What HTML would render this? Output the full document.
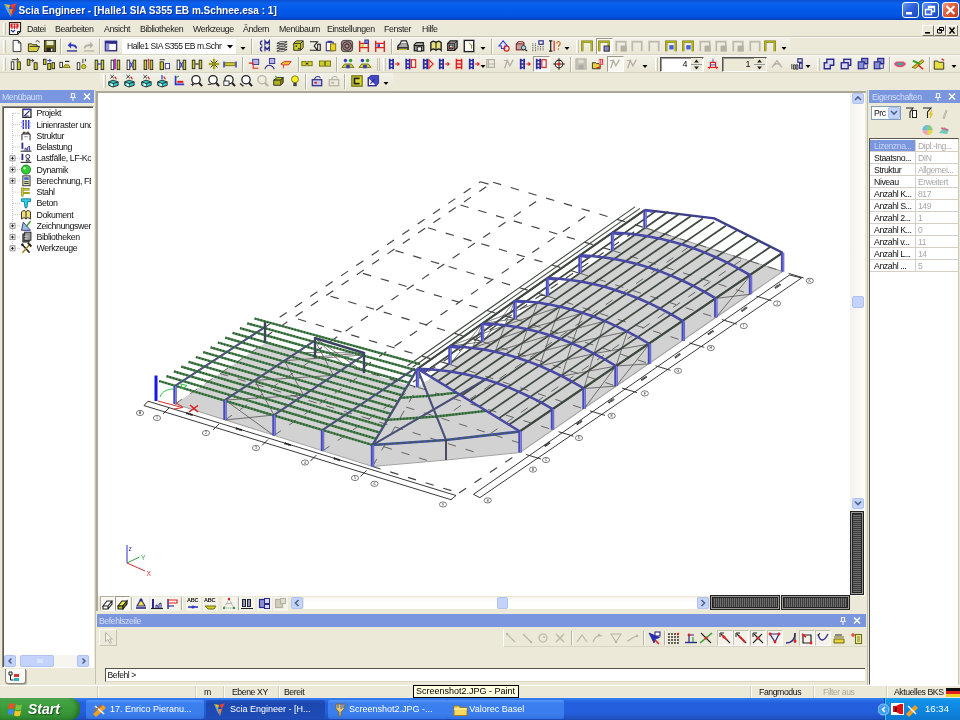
<!DOCTYPE html>
<html lang="de">
<head>
<meta charset="utf-8">
<title>Scia Engineer - [Halle1 SIA S355 EB m.Schnee.esa : 1]</title>
<style>
*{box-sizing:border-box;margin:0;padding:0}
html,body{width:960px;height:720px;overflow:hidden;background:#ECE9D8;font-family:"Liberation Sans",sans-serif;font-size:9px;color:#000}
body{position:relative;will-change:transform}
.a{position:absolute}
.grip{width:3px;height:13px;border-left:1px solid #fff;border-right:1px solid #C8C5B5}
.sep{width:2px;height:15px;border-left:1px solid #B5B2A2;border-right:1px solid #fff}
.ph{height:13px;background:#7A96DF;color:#D6DFF8;font-size:8.7px;letter-spacing:-0.42px;line-height:14px;padding-left:2px;white-space:nowrap;overflow:hidden}
.mi{top:23.5px;font-size:8.8px;letter-spacing:-0.4px;color:#1a1a1a;white-space:nowrap}
.tr{font-size:8.8px;letter-spacing:-0.4px;color:#111;white-space:nowrap;line-height:11px}
.pk{font-size:8.8px;letter-spacing:-0.45px;color:#111;white-space:nowrap;line-height:10px}
.pv{font-size:8.6px;letter-spacing:-0.45px;color:#A8A8A8;white-space:nowrap;line-height:10px}
.st{font-size:8.7px;letter-spacing:-0.42px;color:#111;white-space:nowrap;line-height:12px}
.tk{top:700px;height:19px;border-radius:2px;color:#fff;font-size:9px;line-height:19px;white-space:nowrap;overflow:hidden}
</style>
</head>
<body>
<!-- title bar -->
<div class="a" style="left:0px;top:0px;width:960px;height:20px;background:linear-gradient(#0A4CCB 0,#0C5CE4 2px,#0A62F0 4px,#045AEA 8px,#0356E6 14px,#0450DC 17px,#0344C4 19px,#033CB0 20px)"></div><svg class="a" style="left:3px;top:2px" width="16" height="16" viewBox="0 0 16 16"><path d="M1 2l6 1-1 4z" fill="#E8C020"/><path d="M7 3l7-2-4 6z" fill="#E84040"/><path d="M6 7l4 0-2 8z" fill="#F08030"/><path d="M1 2l5 5 2 8-4-6z" fill="#60B0E0"/><path d="M10 7l4-6-2 8-4 6z" fill="#C03030"/></svg>
<div class="a" style="left:18.6px;top:3.8px;white-space:nowrap;font-weight:bold;font-size:10.05px;line-height:14px;color:#fff;letter-spacing:0px;text-shadow:1px 1px 0 #10308C">Scia Engineer - [Halle1 SIA S355 EB m.Schnee.esa : 1]</div><div class="a" style="left:902px;top:2px;width:17px;height:16px;border:1px solid #fff;border-radius:3px;background:linear-gradient(135deg,#6C9CF4,#2F62DC 45%,#1C48C0)"></div><div class="a" style="left:922px;top:2px;width:17px;height:16px;border:1px solid #fff;border-radius:3px;background:linear-gradient(135deg,#6C9CF4,#2F62DC 45%,#1C48C0)"></div><div class="a" style="left:942px;top:2px;width:17px;height:16px;border:1px solid #fff;border-radius:3px;background:linear-gradient(135deg,#F0A088,#E0603C 40%,#C83C18)"></div><svg class="a" style="left:902px;top:2px" width="57" height="16" viewBox="0 0 57 16"><rect x="4" y="10" width="6" height="2.5" fill="#fff"/><path d="M26.5 4.5h6v5h-6zM26.5 5.5h6" fill="none" stroke="#fff" stroke-width="1.4"/><path d="M23.500 7.500h6v5h-6z" fill="#3A6CE0" stroke="#fff" stroke-width="1.4"/><path d="M44.500 4l8 8M52.500 4l-8 8" stroke="#fff" stroke-width="2.2"/></svg>
<!-- menu bar -->
<div class="a grip" style="left:3px;top:23px;width:3px;height:12px;"></div><svg class="a" style="left:8px;top:21px" width="14" height="15" viewBox="0 0 14 15"><path d="M1.500 1.500h11v9l-3 3h-8z" fill="#fff" stroke="#222" stroke-width="1.2"/><path d="M9.500 13.500v-3h3" fill="none" stroke="#222"/><path d="M3 3h7v3h-7zM4 3v5M6.500 3v5M9 3v5" fill="none" stroke="#E02020" stroke-width="1.1"/><path d="M3 9l2 2 2-2" fill="none" stroke="#2A2A8C" stroke-width="1.1"/></svg>
<div class="a mi" style="left:27px">Datei</div><div class="a mi" style="left:55px">Bearbeiten</div><div class="a mi" style="left:104px">Ansicht</div><div class="a mi" style="left:140px">Bibliotheken</div><div class="a mi" style="left:193px">Werkzeuge</div><div class="a mi" style="left:243px">Ändern</div><div class="a mi" style="left:279px">Menübaum</div><div class="a mi" style="left:327px">Einstellungen</div><div class="a mi" style="left:384px">Fenster</div><div class="a mi" style="left:422px">Hilfe</div>
<div class="a" style="left:922px;top:25px;width:12px;height:11px;background:#ECE9D8;border:1px solid;border-color:#fff #716F64 #716F64 #fff"></div><div class="a" style="left:934px;top:25px;width:12px;height:11px;background:#ECE9D8;border:1px solid;border-color:#fff #716F64 #716F64 #fff"></div><div class="a" style="left:946px;top:25px;width:12px;height:11px;background:#ECE9D8;border:1px solid;border-color:#fff #716F64 #716F64 #fff"></div><svg class="a" style="left:922px;top:25px" width="36" height="11" viewBox="0 0 36 11"><rect x="3" y="7" width="5" height="1.6" fill="#000"/><path d="M17.500 2.500h4v3h-4z M15.500 4.500h4v3.500h-4z" fill="#ECE9D8" stroke="#000" stroke-width="1"/><path d="M27.500 2.500l5 6M32.500 2.500l-5 6" stroke="#000" stroke-width="1.5"/></svg>
<!-- toolbars -->
<div class="a" style="left:0px;top:38px;width:790px;height:16px;background:linear-gradient(#F3F2EA,#E9E6D4)"></div><div class="a" style="left:0px;top:56px;width:960px;height:16px;background:linear-gradient(#F3F2EA,#E9E6D4)"></div><div class="a" style="left:100px;top:73px;width:293px;height:17px;background:linear-gradient(#F3F2EA,#E9E6D4)"></div><div class="a" style="left:596px;top:38px;width:17px;height:17px;background:#F8F7F2;border:1px solid;border-color:#9C9A8C #fff #fff #9C9A8C"></div><div class="a" style="left:607px;top:56px;width:17px;height:16px;background:#F8F7F2;border:1px solid;border-color:#9C9A8C #fff #fff #9C9A8C"></div><div class="a" style="left:533px;top:56px;width:17px;height:16px;background:#F8F7F2;border:1px solid;border-color:#9C9A8C #fff #fff #9C9A8C"></div><svg class="a" style="left:0;top:36px" width="960" height="56" viewBox="0 36 960 56"><g transform="translate(17,46) scale(0.86) translate(-8,-8)"><path d="M3.5 1.5h6l3 3v10h-9z" fill="#fff" stroke="#222" stroke-width="1"/><path d="M9.5 1.5v3h3" fill="none" stroke="#222" stroke-width="1"/></g><g transform="translate(34,46) scale(0.86) translate(-8,-8)"><path d="M1.5 5.5h4l1 1h5v2h3l-3 6h-10z" fill="#D8D040" stroke="#222" stroke-width="1"/><path d="M3 8.5h11" fill="none" stroke="#222" stroke-width="1"/><path d="M10 3c2-2 4-1 4 1" fill="none" stroke="#222" stroke-width="1"/></g><g transform="translate(50,46) scale(0.86) translate(-8,-8)"><rect x="1.5" y="1.5" width="13" height="13" fill="#6A6A14" stroke="#222" stroke-width="1"/><rect x="4" y="2" width="8" height="5" fill="#E8E8D0"/><rect x="4" y="10" width="8" height="5" fill="#222"/><rect x="9" y="11" width="2" height="3" fill="#ddd"/></g><g transform="translate(72,46) scale(0.86) translate(-8,-8)"><path d="M3 7l4-4v3c4 0 7 1 7 5h-2c0-2-2-3-5-3v3z" fill="#3038C8"/><rect x="2" y="13" width="12" height="1.5" fill="#2A2A8C"/></g><g transform="translate(89,46) scale(0.86) translate(-8,-8)"><path d="M13 7l-4-4v3c-4 0-7 1-7 5h2c0-2 2-3 5-3v3z" fill="#B4B1A3"/><rect x="2" y="13" width="12" height="1.5" fill="#B4B1A3"/></g><g transform="translate(111,46) scale(0.86) translate(-8,-8)"><rect x="1.5" y="2.5" width="13" height="11" fill="#fff" stroke="#2A2A8C" stroke-width="1.6"/><rect x="2" y="3" width="12" height="2.5" fill="#2A2A8C"/><rect x="2" y="5" width="4" height="8" fill="#9090D8"/></g><g transform="translate(240.5,47)"><path d="M0 0h5l-2.5 3z" fill="#000"/></g><g transform="translate(265,46) scale(0.86) translate(-8,-8)"><path d="M5 2c-3 0-3 5 0 5M5 9c-3 0-3 5 0 5M8 7v-5l2.500 3 2.500-3v5M8 14v-5l2.500 3 2.500-3v5" fill="none" stroke="#2A2A8C" stroke-width="1.5"/></g><g transform="translate(282,46) scale(0.86) translate(-8,-8)"><path d="M2 5l4-2h8l-4 2zM2 8l4-2h8l-4 2zM2 11l4-2h8l-4 2zM2 14l4-2h8l-4 2z" fill="#fff" stroke="#222" stroke-width="0.9"/></g><g transform="translate(298,46) scale(0.86) translate(-8,-8)"><path d="M3 5l3-3h8v8l-3 3h-8z" fill="#CDCD2C" stroke="#222" stroke-width="1"/><path d="M3 5h8v8M11 5l3-3" fill="none" stroke="#222" stroke-width="1"/><circle cx="6" cy="8" r="1" fill="#222"/><circle cx="9" cy="11" r="1" fill="#222"/></g><g transform="translate(315,46) scale(0.86) translate(-8,-8)"><path d="M2 3h9l-4 5 4 5h-9M11 6h3v7h-3" fill="none" stroke="#222" stroke-width="1.3"/><rect x="11" y="6" width="3" height="7" fill="#ddd" stroke="#222" stroke-width="1"/></g><g transform="translate(331,46) scale(0.86) translate(-8,-8)"><rect x="2.5" y="3.5" width="8" height="10" fill="#fff" stroke="#2A2A8C" stroke-width="1.2"/><rect x="7.5" y="5.5" width="6" height="8" fill="#F0D020" stroke="#6E6E10" stroke-width="1"/><rect x="4" y="2" width="5" height="2" fill="#2A2A8C"/></g><g transform="translate(347,46) scale(0.86) translate(-8,-8)"><rect x="1.5" y="1.5" width="13" height="13" fill="#A89090" stroke="#333" stroke-width="1" rx="3"/><circle cx="8" cy="8" r="5" fill="none" stroke="#4A3030" stroke-width="1.3"/><circle cx="8" cy="8" r="2.5" fill="none" stroke="#4A3030" stroke-width="1.3"/></g><g transform="translate(364,46) scale(0.86) translate(-8,-8)"><path d="M3 2v13M13 2v13" fill="none" stroke="#E02020" stroke-width="1.6"/><path d="M3 5h10M3 10h10" fill="none" stroke="#E02020" stroke-width="1.4"/><rect x="5" y="6" width="3" height="3" fill="#CDCD2C"/><rect x="9" y="1" width="4" height="4" fill="#8080E0" stroke="#2A2A8C" stroke-width="1"/></g><g transform="translate(380,46) scale(0.86) translate(-8,-8)"><path d="M3 2v13M13 2v13" fill="none" stroke="#E02020" stroke-width="1.6"/><path d="M3 5h10M3 10h10" fill="none" stroke="#E02020" stroke-width="1.4"/><rect x="5" y="6" width="3" height="3" fill="#3038C8"/></g><g transform="translate(403,46) scale(0.86) translate(-8,-8)"><path d="M2 8l3-3h8l1 3v4h-12z" fill="#aaa" stroke="#222" stroke-width="1.5"/><path d="M5 5l1-3h6l1 3" fill="#fff" stroke="#222" stroke-width="1.3"/><path d="M2 10h12" fill="none" stroke="#222" stroke-width="1.3"/><path d="M3 12h10" fill="none" stroke="#C8C020" stroke-width="1.2"/></g><g transform="translate(419,46) scale(0.86) translate(-8,-8)"><path d="M2 7l3-3h8v3" fill="#bbb" stroke="#222" stroke-width="1.4"/><rect x="2.5" y="7.5" width="11" height="6" fill="#999" stroke="#222" stroke-width="1.5"/><rect x="6" y="9" width="5" height="5" fill="#fff" stroke="#222" stroke-width="1.2"/></g><g transform="translate(436,46) scale(0.86) translate(-8,-8)"><path d="M2 4c2-2 4-2 6 0 2-2 4-2 6 0v9c-2-2-4-2-6 0-2-2-4-2-6 0z" fill="#E8E080" stroke="#222" stroke-width="1.6"/><path d="M8 4v9" fill="none" stroke="#222" stroke-width="1.2"/></g><g transform="translate(452,46) scale(0.86) translate(-8,-8)"><path d="M3 5l3-3h8v8l-3 3h-8z" fill="#999" stroke="#222" stroke-width="1.5"/><path d="M3 5h8v8M11 5l3-3" fill="none" stroke="#222" stroke-width="1"/><rect x="5" y="7" width="4" height="4" fill="#fff" stroke="#222" stroke-width="1"/><rect x="6" y="9" width="2" height="2" fill="#E02020"/></g><g transform="translate(469,46) scale(0.86) translate(-8,-8)"><rect x="2.5" y="1.5" width="11" height="13" fill="#fff" stroke="#222" stroke-width="1.6"/><path d="M8 4l3 3v4" fill="#E8E8A0" stroke="#6E6E10" stroke-width="1"/></g><g transform="translate(504,46) scale(0.86) translate(-8,-8)"><path d="M2 8l5-6 5 6h-3v3h-4v-3z" fill="#E8E8FF" stroke="#3038C8" stroke-width="1.2"/><circle cx="11" cy="11" r="3" fill="none" stroke="#E02020" stroke-width="1.4"/></g><g transform="translate(521,46) scale(0.86) translate(-8,-8)"><rect x="2.5" y="5.5" width="9" height="7" fill="#D0A0A0" stroke="#702020" stroke-width="1.2"/><path d="M3 5l2-2h5l2 2" fill="none" stroke="#702020" stroke-width="1.2"/><circle cx="11" cy="10" r="2.5" fill="#A0E0F0" stroke="#222" stroke-width="1"/><path d="M13 12l2 2" fill="none" stroke="#222" stroke-width="1.5"/></g><g transform="translate(538,46) scale(0.86) translate(-8,-8)"><path d="M2 5v9M5 5v9M8 8v6" fill="none" stroke="#222" stroke-width="1" stroke-dasharray="1 1"/><rect x="9" y="2" width="5" height="4" fill="#fff" stroke="#2A2A8C" stroke-width="1.4"/><path d="M11 8v6M14 8v6" fill="none" stroke="#222" stroke-width="1" stroke-dasharray="1 1"/></g><g transform="translate(555,46) scale(0.86) translate(-8,-8)"><path d="M3 2v12M1 2h4M1 14h4" fill="none" stroke="#222" stroke-width="1.4"/><path d="M7 2v12" fill="none" stroke="#E02020" stroke-width="1.4"/><path d="M10 5c0-3 4-3 4 0 0 2-2 2-2 4M12 11v1.5" fill="none" stroke="#C06000" stroke-width="1.4"/></g><g transform="translate(480.5,47)"><path d="M0 0h5l-2.5 3z" fill="#000"/></g><g transform="translate(564.5,47)"><path d="M0 0h5l-2.5 3z" fill="#000"/></g><g transform="translate(587,46) scale(0.86) translate(-8,-8)"><path d="M2.5 14v-11h11v11" fill="none" stroke="#6E6E10" stroke-width="2.6"/><path d="M2.5 14v-11h11v11" fill="none" stroke="#C8C818" stroke-width="1.2"/></g><g transform="translate(604,46) scale(0.86) translate(-8,-8)"><path d="M2.5 14v-11h11v11" fill="none" stroke="#6E6E10" stroke-width="2.6"/><path d="M2.5 14v-11h11v11" fill="none" stroke="#C8C818" stroke-width="1.2"/><rect x="8" y="8" width="6" height="6" fill="#8888C8" stroke="#222" stroke-width="1"/></g><g transform="translate(621,46) scale(0.86) translate(-8,-8)"><path d="M2.5 14v-11h11v11" fill="none" stroke="#D8D5C8" stroke-width="2.6"/><path d="M2.5 14v-11h11v11" fill="none" stroke="#B4B1A3" stroke-width="1.2"/><rect x="8" y="8" width="6" height="6" fill="#B4B1A3" stroke="#B4B1A3" stroke-width="1"/></g><g transform="translate(637,46) scale(0.86) translate(-8,-8)"><path d="M2.5 14v-11h11v11" fill="none" stroke="#D8D5C8" stroke-width="2.6"/><path d="M2.5 14v-11h11v11" fill="none" stroke="#B4B1A3" stroke-width="1.2"/></g><g transform="translate(654,46) scale(0.86) translate(-8,-8)"><path d="M2.5 14v-11h11v11" fill="none" stroke="#D8D5C8" stroke-width="2.6"/><path d="M2.5 14v-11h11v11" fill="none" stroke="#B4B1A3" stroke-width="1.2"/></g><g transform="translate(671,46) scale(0.86) translate(-8,-8)"><path d="M2.5 14v-11h11v11" fill="none" stroke="#6E6E10" stroke-width="2.6"/><path d="M2.5 14v-11h11v11" fill="none" stroke="#C8C818" stroke-width="1.2"/><path d="M6 7h5v5h-5z" fill="#4060E0"/></g><g transform="translate(688,46) scale(0.86) translate(-8,-8)"><path d="M2.5 14v-11h11v11" fill="none" stroke="#6E6E10" stroke-width="2.6"/><path d="M2.5 14v-11h11v11" fill="none" stroke="#C8C818" stroke-width="1.2"/><path d="M6 7h5v5h-5z" fill="#4060E0"/></g><g transform="translate(705,46) scale(0.86) translate(-8,-8)"><path d="M2.5 14v-11h11v11" fill="none" stroke="#D8D5C8" stroke-width="2.6"/><path d="M2.5 14v-11h11v11" fill="none" stroke="#B4B1A3" stroke-width="1.2"/><rect x="8" y="8" width="6" height="6" fill="#B4B1A3" stroke="#B4B1A3" stroke-width="1"/></g><g transform="translate(721,46) scale(0.86) translate(-8,-8)"><path d="M2.5 14v-11h11v11" fill="none" stroke="#D8D5C8" stroke-width="2.6"/><path d="M2.5 14v-11h11v11" fill="none" stroke="#B4B1A3" stroke-width="1.2"/><rect x="8" y="8" width="6" height="6" fill="#B4B1A3" stroke="#B4B1A3" stroke-width="1"/></g><g transform="translate(738,46) scale(0.86) translate(-8,-8)"><path d="M2.5 14v-11h11v11" fill="none" stroke="#D8D5C8" stroke-width="2.6"/><path d="M2.5 14v-11h11v11" fill="none" stroke="#B4B1A3" stroke-width="1.2"/><rect x="8" y="8" width="6" height="6" fill="#B4B1A3" stroke="#B4B1A3" stroke-width="1"/></g><g transform="translate(755,46) scale(0.86) translate(-8,-8)"><path d="M2.5 14v-11h11v11" fill="none" stroke="#D8D5C8" stroke-width="2.6"/><path d="M2.5 14v-11h11v11" fill="none" stroke="#B4B1A3" stroke-width="1.2"/></g><g transform="translate(770,46) scale(0.86) translate(-8,-8)"><path d="M2.5 14v-11h11v11" fill="none" stroke="#6E6E10" stroke-width="2.6"/><path d="M2.5 14v-11h11v11" fill="none" stroke="#C8C818" stroke-width="1.2"/></g><g transform="translate(781.5,47)"><path d="M0 0h5l-2.5 3z" fill="#000"/></g><g transform="translate(16,64) scale(0.86) translate(-8,-8)"><rect x="2.5" y="5.5" width="3" height="9" fill="#fff" stroke="#222" stroke-width="1"/><rect x="9.5" y="5.5" width="3.5" height="9" fill="#CDCD2C" stroke="#222" stroke-width="1"/><path d="M3 3h8m-2-2l2 2-2 2" fill="none" stroke="#222" stroke-width="1"/></g><g transform="translate(32,64) scale(0.86) translate(-8,-8)"><rect x="2.5" y="2.5" width="3" height="7" fill="#CDCD2C" stroke="#222" stroke-width="1"/><rect x="10.5" y="6.5" width="3.5" height="8" fill="#CDCD2C" stroke="#222" stroke-width="1"/><path d="M6 4h4m-2-2l2 2-2 2" fill="none" stroke="#222" stroke-width="1"/></g><g transform="translate(49,64) scale(0.86) translate(-8,-8)"><rect x="1.5" y="2.5" width="3" height="6" fill="#CDCD2C" stroke="#222" stroke-width="1"/><rect x="6.5" y="7.5" width="3.5" height="7" fill="#CDCD2C" stroke="#222" stroke-width="1"/><rect x="11.5" y="6.5" width="3" height="7" fill="#CDCD2C" stroke="#222" stroke-width="1"/><path d="M6 4h5M9 2v4" fill="none" stroke="#3038C8" stroke-width="1.2"/></g><g transform="translate(65,64) scale(0.86) translate(-8,-8)"><rect x="2" y="6" width="3" height="6" fill="#fff" stroke="#222" stroke-width="1"/><path d="M6 12h8l-2-3h-4z" fill="#CDCD2C" stroke="#6E6E10" stroke-width="1"/><path d="M8 5h5" fill="none" stroke="#222" stroke-width="1.4"/></g><g transform="translate(82,64) scale(0.86) translate(-8,-8)"><rect x="2.5" y="6.5" width="3" height="8" fill="#fff" stroke="#222" stroke-width="1"/><circle cx="10" cy="11" r="2.5" fill="#CDCD2C" stroke="#6E6E10" stroke-width="1"/><path d="M9 2v5M12 2v3" fill="none" stroke="#222" stroke-width="1"/></g><g transform="translate(99,64) scale(0.86) translate(-8,-8)"><rect x="3.5" y="3.5" width="3" height="11" fill="#CDCD2C" stroke="#222" stroke-width="1"/><rect x="10.5" y="3.5" width="3" height="11" fill="#CDCD2C" stroke="#222" stroke-width="1"/><path d="M6 8h5" fill="none" stroke="#3038C8" stroke-width="1.4"/></g><g transform="translate(115,64) scale(0.86) translate(-8,-8)"><rect x="3.5" y="3.5" width="3" height="11" fill="#fff" stroke="#222" stroke-width="1"/><rect x="10.5" y="3.5" width="3" height="11" fill="#CDCD2C" stroke="#222" stroke-width="1"/><rect x="7" y="2" width="2" height="12" fill="#B020B0"/></g><g transform="translate(131,64) scale(0.86) translate(-8,-8)"><rect x="3.5" y="3.5" width="3" height="11" fill="#fff" stroke="#222" stroke-width="1"/><rect x="10.5" y="3.5" width="3" height="11" fill="#CDCD2C" stroke="#222" stroke-width="1"/><path d="M7 6l3 6M10 6l-3 6" fill="none" stroke="#3038C8" stroke-width="1.2"/></g><g transform="translate(148,64) scale(0.86) translate(-8,-8)"><rect x="3.5" y="3.5" width="3" height="11" fill="#CDCD2C" stroke="#222" stroke-width="1"/><rect x="10.5" y="3.5" width="3" height="11" fill="#CDCD2C" stroke="#222" stroke-width="1"/><path d="M8.5 2v12" fill="none" stroke="#E02020" stroke-width="1"/><path d="M8.5 2l-1.5 2h3z" fill="#E02020"/></g><g transform="translate(164,64) scale(0.86) translate(-8,-8)"><rect x="3.5" y="5.5" width="4" height="9" fill="#CDCD2C" stroke="#222" stroke-width="1"/><rect x="9.5" y="7.5" width="5" height="6" fill="#fff" stroke="#2A2A8C" stroke-width="1"/><path d="M3 3h6" fill="none" stroke="#222" stroke-width="1"/></g><g transform="translate(181,64) scale(0.86) translate(-8,-8)"><rect x="3.5" y="3.5" width="3" height="11" fill="#fff" stroke="#222" stroke-width="1"/><rect x="10.5" y="3.5" width="3" height="11" fill="#CDCD2C" stroke="#222" stroke-width="1"/><path d="M7 6l3 6M10 6l-3 6" fill="none" stroke="#3038C8" stroke-width="1.2"/></g><g transform="translate(197,64) scale(0.86) translate(-8,-8)"><rect x="2.5" y="3.5" width="3" height="10" fill="#CDCD2C" stroke="#222" stroke-width="1"/><rect x="10.5" y="3.5" width="3" height="10" fill="#CDCD2C" stroke="#222" stroke-width="1"/><path d="M6 8h4" fill="none" stroke="#222" stroke-width="1.4"/></g><g transform="translate(214,64) scale(0.86) translate(-8,-8)"><path d="M2 8h12M8 2v12" fill="none" stroke="#CDCD2C" stroke-width="3"/><path d="M2 8h12M8 2v12" fill="none" stroke="#6E6E10" stroke-width="1"/><path d="M4 4l3 3M12 4l-3 3M4 12l3-3M12 12l-3-3" fill="none" stroke="#222" stroke-width="1"/></g><g transform="translate(230,64) scale(0.86) translate(-8,-8)"><rect x="2" y="6.5" width="12" height="3.5" fill="#CDCD2C" stroke="#6E6E10" stroke-width="1"/><path d="M1 5v7M15 5v7" fill="none" stroke="#3038C8" stroke-width="1.6"/></g><g transform="translate(254,64) scale(0.86) translate(-8,-8)"><rect x="6.5" y="2.5" width="7" height="6" fill="#B8B8E8" stroke="#2A2A8C" stroke-width="1"/><path d="M2 7h5v6h6" fill="none" stroke="#E02020" stroke-width="1.2"/></g><g transform="translate(270,64) scale(0.86) translate(-8,-8)"><rect x="7.5" y="1.5" width="6" height="6" fill="#B8B8E8" stroke="#2A2A8C" stroke-width="1"/><path d="M2 14c2-6 8-6 11 0" fill="none" stroke="#2A2A8C" stroke-width="1.2"/></g><g transform="translate(286,64) scale(0.86) translate(-8,-8)"><path d="M2 8l4-3h8l-3 4h-7z" fill="#E8C030" stroke="#E02020" stroke-width="1"/><path d="M5 9v4" fill="none" stroke="#E02020" stroke-width="1"/></g><g transform="translate(307,64) scale(0.86) translate(-8,-8)"><rect x="2" y="5" width="5" height="5" fill="#CDCD2C" stroke="#6E6E10" stroke-width="1"/><rect x="9" y="5" width="5" height="5" fill="#CDCD2C" stroke="#6E6E10" stroke-width="1"/><path d="M7 7.5h2" fill="none" stroke="#222" stroke-width="1.4"/></g><g transform="translate(325,64) scale(0.86) translate(-8,-8)"><rect x="1.5" y="4.5" width="6" height="6" fill="#CDCD2C" stroke="#6E6E10" stroke-width="1"/><rect x="8.5" y="4.5" width="6" height="6" fill="#CDCD2C" stroke="#6E6E10" stroke-width="1"/></g><g transform="translate(348,64) scale(0.86) translate(-8,-8)"><circle cx="5" cy="4" r="2" fill="#3038C8"/><circle cx="11" cy="4" r="2" fill="#30A030"/><path d="M1 12l3-4h8l3 4z" fill="#CDCD2C" stroke="#6E6E10" stroke-width="1"/><rect x="6" y="9" width="4" height="4" fill="#3038C8"/></g><g transform="translate(365,64) scale(0.86) translate(-8,-8)"><circle cx="5" cy="4" r="2" fill="#3038C8"/><circle cx="11" cy="4" r="2" fill="#30A030"/><path d="M1 12l3-4h8l3 4z" fill="#CDCD2C" stroke="#6E6E10" stroke-width="1"/><rect x="6" y="9" width="4" height="4" fill="#3038C8"/></g><g transform="translate(394,64) scale(0.86) translate(-8,-8)"><path d="M3 2v12M7 2v12" fill="none" stroke="#2A2AA4" stroke-width="2"/><path d="M3 4h4M3 8h4M3 12h4" fill="none" stroke="#2A2AA4" stroke-width="1.6"/><path d="M9 8h5m-2-2l2 2-2 2" fill="none" stroke="#E02020" stroke-width="1.3"/></g><g transform="translate(410.5,64) scale(0.86) translate(-8,-8)"><path d="M3 2v12M7 2v12" fill="none" stroke="#2A2AA4" stroke-width="2"/><path d="M3 4h4M3 8h4M3 12h4" fill="none" stroke="#2A2AA4" stroke-width="1.6"/><rect x="9" y="3" width="5" height="9" fill="none" stroke="#E02020" stroke-width="1.3"/></g><g transform="translate(428,64) scale(0.86) translate(-8,-8)"><path d="M3 2v12M7 2v12" fill="none" stroke="#2A2AA4" stroke-width="2"/><path d="M3 4h4M3 8h4M3 12h4" fill="none" stroke="#2A2AA4" stroke-width="1.6"/><path d="M9 3l5 5-5 5z" fill="none" stroke="#E02020" stroke-width="1.3"/></g><g transform="translate(444,64) scale(0.86) translate(-8,-8)"><path d="M3 2v12M7 2v12" fill="none" stroke="#2A2AA4" stroke-width="2"/><path d="M3 4h4M3 8h4M3 12h4" fill="none" stroke="#2A2AA4" stroke-width="1.6"/><path d="M9 8h5m-2-2l2 2-2 2" fill="none" stroke="#E02020" stroke-width="1.3"/></g><g transform="translate(459,64) scale(0.86) translate(-8,-8)"><path d="M5 2v12M11 2v12M5 4h6M5 8h6M5 12h6" fill="none" stroke="#E02020" stroke-width="1.8"/></g><g transform="translate(474,64) scale(0.86) translate(-8,-8)"><path d="M3 2v12M7 2v12" fill="none" stroke="#2A2AA4" stroke-width="2"/><path d="M3 4h4M3 8h4M3 12h4" fill="none" stroke="#2A2AA4" stroke-width="1.6"/><path d="M9 8h5m-2-2l2 2-2 2" fill="none" stroke="#E02020" stroke-width="1.3"/></g><g transform="translate(491,64) scale(0.86) translate(-8,-8)"><path d="M3 3h9v9h-9zM5 3v9M3 8h9" fill="none" stroke="#B4B1A3" stroke-width="1.4"/></g><g transform="translate(509,64) scale(0.86) translate(-8,-8)"><path d="M3 13l3-9 3 6 4-7" fill="none" stroke="#B4B1A3" stroke-width="1.6"/><path d="M2 4h5" fill="none" stroke="#B4B1A3" stroke-width="1.2"/></g><g transform="translate(525,64) scale(0.86) translate(-8,-8)"><path d="M3 2v12M7 2v12" fill="none" stroke="#2A2AA4" stroke-width="2"/><path d="M3 4h4M3 8h4M3 12h4" fill="none" stroke="#2A2AA4" stroke-width="1.6"/><path d="M9 8h5m-2-2l2 2-2 2" fill="none" stroke="#E02020" stroke-width="1.3"/></g><g transform="translate(541,64) scale(0.86) translate(-8,-8)"><path d="M3 2v12M7 2v12" fill="none" stroke="#2A2AA4" stroke-width="2"/><path d="M3 4h4M3 8h4M3 12h4" fill="none" stroke="#2A2AA4" stroke-width="1.6"/><rect x="9" y="3" width="5" height="9" fill="none" stroke="#E02020" stroke-width="1.3"/></g><g transform="translate(559,64) scale(0.86) translate(-8,-8)"><circle cx="8" cy="8" r="4.5" fill="none" stroke="#222" stroke-width="1.2"/><path d="M8 1v14M1 8h14" fill="none" stroke="#222" stroke-width="1"/><circle cx="8" cy="8" r="1.8" fill="#E02020"/></g><g transform="translate(581,64) scale(0.86) translate(-8,-8)"><rect x="2" y="2" width="12" height="12" fill="#C4C1B3" stroke="#B4B1A3" stroke-width="1"/><rect x="5" y="3" width="6" height="4" fill="#ddd"/><rect x="5" y="9" width="6" height="5" fill="#aaa"/></g><g transform="translate(598,64) scale(0.86) translate(-8,-8)"><path d="M1.5 6.5h4l1 1h4v6h-9z" fill="#E8D040" stroke="#222" stroke-width="1"/><rect x="9" y="2" width="5" height="7" fill="#E04050"/><path d="M10 3v5M12 3v5" fill="none" stroke="#fff" stroke-width="0.8"/><path d="M6 13l5-2" fill="none" stroke="#E02020" stroke-width="1.2"/></g><g transform="translate(615,64) scale(0.86) translate(-8,-8)"><path d="M3 13l3-9 3 6 4-7" fill="none" stroke="#B4B1A3" stroke-width="1.6"/><path d="M2 4h5" fill="none" stroke="#B4B1A3" stroke-width="1.2"/></g><g transform="translate(632,64) scale(0.86) translate(-8,-8)"><path d="M3 13l3-9 3 6 4-7" fill="none" stroke="#B4B1A3" stroke-width="1.6"/><path d="M2 4h5" fill="none" stroke="#B4B1A3" stroke-width="1.2"/></g><g transform="translate(480.5,65)"><path d="M0 0h5l-2.5 3z" fill="#000"/></g><g transform="translate(642.5,65)"><path d="M0 0h5l-2.5 3z" fill="#000"/></g><g transform="translate(713,64) scale(0.86) translate(-8,-8)"><path d="M2 12h12" fill="none" stroke="#E02020" stroke-width="1.4"/><path d="M5 12v-6h6v6" fill="none" stroke="#E02020" stroke-width="1.4"/><path d="M8 2v4M5 9h6" fill="none" stroke="#3038C8" stroke-width="1"/><path d="M3 14l2-2M13 14l-2-2" fill="none" stroke="#E02020" stroke-width="1"/></g><g transform="translate(777,64) scale(0.86) translate(-8,-8)"><path d="M2 12c4-6 8-6 12 0M4 9l4-5 4 5" fill="none" stroke="#B4B1A3" stroke-width="1.3"/></g><g transform="translate(797,64) scale(0.86) translate(-8,-8)"><path d="M2 8v6M4 9v5h2v-5zM7 9v5h2v-5z" fill="none" stroke="#222" stroke-width="1"/><rect x="9" y="2" width="5" height="4" fill="none" stroke="#2A2A8C" stroke-width="1.4"/><rect x="11" y="7" width="3" height="6" fill="none" stroke="#2A2A8C" stroke-width="1.4"/></g><g transform="translate(805.5,65)"><path d="M0 0h5l-2.5 3z" fill="#000"/></g><g transform="translate(829,64) scale(0.86) translate(-8,-8)"><path d="M5.5 2.5h8v7h-4v4h-7v-7h3z" fill="#D8D8F0" stroke="#2A2A8C" stroke-width="1.6"/></g><g transform="translate(846,64) scale(0.86) translate(-8,-8)"><rect x="5.5" y="2.5" width="8" height="7" fill="#D8D8F0" stroke="#2A2A8C" stroke-width="1.6"/><rect x="2.5" y="6.5" width="8" height="7" fill="#D8D8F0" stroke="#2A2A8C" stroke-width="1.6"/></g><g transform="translate(863,64) scale(0.86) translate(-8,-8)"><rect x="6.5" y="1.5" width="7" height="6" fill="#8890D0" stroke="#2A2A8C" stroke-width="1.4"/><rect x="2.5" y="5.5" width="7" height="8" fill="#8890D0" stroke="#2A2A8C" stroke-width="1.4"/><rect x="9" y="8" width="4" height="5" fill="#D8D8F0" stroke="#2A2A8C" stroke-width="1"/></g><g transform="translate(879,64) scale(0.86) translate(-8,-8)"><rect x="6.5" y="1.5" width="7" height="6" fill="#8890D0" stroke="#2A2A8C" stroke-width="1.4"/><rect x="2.5" y="5.5" width="7" height="8" fill="#8890D0" stroke="#2A2A8C" stroke-width="1.4"/><rect x="9" y="8" width="4" height="5" fill="#D8D8F0" stroke="#2A2A8C" stroke-width="1"/></g><g transform="translate(900,64) scale(0.86) translate(-8,-8)"><path d="M1 8c3-5 5-2 7-3 2 1 4-2 7 3-3 5-11 5-14 0z" fill="#E05070"/><path d="M4 8c2-2 6-2 8 0-2 2-6 2-8 0z" fill="#30B0A0"/></g><g transform="translate(918,64) scale(0.86) translate(-8,-8)"><path d="M1 12l12-9 2 2-10 8z" fill="#C8C020" stroke="#6E6E10" stroke-width="1"/><path d="M2 4l8 4" fill="none" stroke="#30A030" stroke-width="2.4"/><path d="M8 9l6 5" fill="none" stroke="#E02020" stroke-width="1.6"/></g><g transform="translate(939,64) scale(0.86) translate(-8,-8)"><path d="M2.5 4.5h4l1 1.5h6v8h-11z" fill="#E8E040" stroke="#222" stroke-width="1"/><path d="M11 2l3 2" fill="none" stroke="#E02020" stroke-width="1.4"/></g><g transform="translate(951.5,65)"><path d="M0 0h5l-2.5 3z" fill="#000"/></g><g transform="translate(113,81) scale(0.86) translate(-8,-8)"><path d="M3 9l5-2 6 2v4l-6 2-5-2z" fill="#28C8C0" stroke="#222" stroke-width="1"/><path d="M3 9l5 2 6-2M8 11v4" fill="none" stroke="#222" stroke-width="1"/><path d="M5 10.5l3 1v2.5l-3-1z" fill="#fff"/><path d="M5 1l4 4M9 1l-4 4" fill="none" stroke="#222" stroke-width="1"/><path d="M10 3l2 3" fill="none" stroke="#E02020" stroke-width="1.4"/></g><g transform="translate(129,81) scale(0.86) translate(-8,-8)"><path d="M3 9l5-2 6 2v4l-6 2-5-2z" fill="#28C8C0" stroke="#222" stroke-width="1"/><path d="M3 9l5 2 6-2M8 11v4" fill="none" stroke="#222" stroke-width="1"/><path d="M5 10.5l3 1v2.5l-3-1z" fill="#fff"/><path d="M5 1l4 4M9 1l-4 4" fill="none" stroke="#222" stroke-width="1"/><path d="M10 3l2 3" fill="none" stroke="#E02020" stroke-width="1.4"/></g><g transform="translate(146,81) scale(0.86) translate(-8,-8)"><path d="M3 9l5-2 6 2v4l-6 2-5-2z" fill="#28C8C0" stroke="#222" stroke-width="1"/><path d="M3 9l5 2 6-2M8 11v4" fill="none" stroke="#222" stroke-width="1"/><path d="M5 10.5l3 1v2.5l-3-1z" fill="#fff"/><path d="M5 1l4 4M9 1l-4 4" fill="none" stroke="#222" stroke-width="1"/><path d="M10 3l2 3" fill="none" stroke="#E02020" stroke-width="1.4"/></g><g transform="translate(162,81) scale(0.86) translate(-8,-8)"><path d="M3 9l5-2 6 2v4l-6 2-5-2z" fill="#28C8C0" stroke="#222" stroke-width="1"/><path d="M3 9l5 2 6-2M8 11v4" fill="none" stroke="#222" stroke-width="1"/><path d="M5 10.5l3 1v2.5l-3-1z" fill="#fff"/><path d="M8 1v5" fill="none" stroke="#3038C8" stroke-width="1.4"/><path d="M10 3l2 3" fill="none" stroke="#E02020" stroke-width="1.4"/></g><g transform="translate(179,81) scale(0.86) translate(-8,-8)"><path d="M4 2v10h10" fill="none" stroke="#3038C8" stroke-width="2"/><path d="M6 9h7" fill="none" stroke="#E02020" stroke-width="2.4"/><path d="M5 4l3-2" fill="none" stroke="#30A030" stroke-width="1.2"/></g><g transform="translate(196,81) scale(0.86) translate(-8,-8)"><circle cx="8" cy="6.5" r="4.8" fill="#fff" stroke="#222" stroke-width="1.5"/><path d="M11.5 10l3.5 4" fill="none" stroke="#222" stroke-width="2.4"/><path d="M2 12h4M4 10v4" fill="none" stroke="#222" stroke-width="1"/></g><g transform="translate(213,81) scale(0.86) translate(-8,-8)"><circle cx="8" cy="6.5" r="4.8" fill="#fff" stroke="#222" stroke-width="1.5"/><path d="M11.5 10l3.5 4" fill="none" stroke="#222" stroke-width="2.4"/><path d="M2 12h4" fill="none" stroke="#222" stroke-width="1"/></g><g transform="translate(229,81) scale(0.86) translate(-8,-8)"><circle cx="8" cy="6.5" r="4.8" fill="#fff" stroke="#222" stroke-width="1.5"/><path d="M11.5 10l3.5 4" fill="none" stroke="#222" stroke-width="2.4"/><rect x="2" y="8" width="6" height="5" fill="#fff" stroke="#222" stroke-width="1"/></g><g transform="translate(246,81) scale(0.86) translate(-8,-8)"><circle cx="8" cy="6.5" r="4.8" fill="#fff" stroke="#222" stroke-width="1.5"/><path d="M11.5 10l3.5 4" fill="none" stroke="#222" stroke-width="2.4"/><path d="M1 11l4 3" fill="none" stroke="#222" stroke-width="1.5"/></g><g transform="translate(262,81) scale(0.86) translate(-8,-8)"><circle cx="8" cy="6.5" r="4.8" fill="none" stroke="#B4B1A3" stroke-width="1.5"/><path d="M11.5 10l3.5 4" fill="none" stroke="#B4B1A3" stroke-width="2.4"/></g><g transform="translate(278,81) scale(0.86) translate(-8,-8)"><path d="M3 7l4-3h7l-3 3z" fill="#CDCD2C" stroke="#222" stroke-width="1"/><path d="M3 7h8v6h-8z" fill="#B0B020" stroke="#222" stroke-width="1"/><path d="M11 7l3-3v6l-3 3" fill="#808010" stroke="#222" stroke-width="1"/><path d="M5 2l2 3" fill="none" stroke="#30A030" stroke-width="1.4"/></g><g transform="translate(295,81) scale(0.86) translate(-8,-8)"><circle cx="8" cy="6" r="4" fill="#F8F020" stroke="#6E6E10" stroke-width="1"/><rect x="6" y="10" width="4" height="4" fill="#444"/></g><g transform="translate(317,81) scale(0.86) translate(-8,-8)"><rect x="2.5" y="6.5" width="11" height="7" fill="#C8C8E8" stroke="#2A2A8C" stroke-width="1.4"/><path d="M5 6c1-4 6-4 7-1" fill="none" stroke="#2A2A8C" stroke-width="1.2"/><rect x="5" y="9" width="3" height="2" fill="#E02020"/></g><g transform="translate(334,81) scale(0.86) translate(-8,-8)"><rect x="2.5" y="6.5" width="11" height="7" fill="none" stroke="#B4B1A3" stroke-width="1.4"/><path d="M5 6c1-4 6-4 7-1" fill="none" stroke="#B4B1A3" stroke-width="1.2"/><rect x="5" y="9" width="3" height="2" fill="#B4B1A3"/></g><g transform="translate(357,81) scale(0.86) translate(-8,-8)"><rect x="2" y="2" width="12" height="12" fill="#D8D830" stroke="#6E6E10" stroke-width="1.4"/><path d="M11 5h-6v6h6" fill="none" stroke="#222" stroke-width="2"/></g><g transform="translate(373,81) scale(0.86) translate(-8,-8)"><rect x="2.5" y="4.5" width="9" height="9" fill="#fff" stroke="#2A2A8C" stroke-width="1.6"/><path d="M2.5 4.5l3-3h9v9l-3 3" fill="#4048C8" stroke="#2A2A8C" stroke-width="1"/><path d="M5 11l5-5" fill="none" stroke="#2A2A8C" stroke-width="1.4"/></g><g transform="translate(383.5,82)"><path d="M0 0h5l-2.5 3z" fill="#000"/></g></svg>
<div class="a grip" style="left:3px;top:40px;width:3px;height:13px;"></div><div class="a grip" style="left:576px;top:40px;width:3px;height:13px;"></div><div class="a grip" style="left:3px;top:58px;width:3px;height:13px;"></div><div class="a grip" style="left:383px;top:58px;width:3px;height:13px;"></div><div class="a grip" style="left:655px;top:58px;width:3px;height:13px;"></div><div class="a grip" style="left:817px;top:58px;width:3px;height:13px;"></div><div class="a grip" style="left:103px;top:75px;width:3px;height:13px;"></div><div class="a" style="left:377px;top:58px;width:3px;height:13px;border-left:1px solid #B5B2A2;border-right:1px solid #B5B2A2;opacity:.7"></div><div class="a sep" style="left:60px;top:39px;width:2px;height:15px;"></div><div class="a sep" style="left:99px;top:39px;width:2px;height:15px;"></div><div class="a sep" style="left:251px;top:39px;width:2px;height:15px;"></div><div class="a sep" style="left:391px;top:39px;width:2px;height:15px;"></div><div class="a sep" style="left:491px;top:39px;width:2px;height:15px;"></div><div class="a sep" style="left:242px;top:57px;width:2px;height:15px;"></div><div class="a sep" style="left:298px;top:57px;width:2px;height:15px;"></div><div class="a sep" style="left:336px;top:57px;width:2px;height:15px;"></div><div class="a sep" style="left:570px;top:57px;width:2px;height:15px;"></div><div class="a sep" style="left:889px;top:57px;width:2px;height:15px;"></div><div class="a sep" style="left:929px;top:57px;width:2px;height:15px;"></div><div class="a sep" style="left:305px;top:74px;width:2px;height:15px;"></div><div class="a sep" style="left:344px;top:74px;width:2px;height:15px;"></div><div class="a" style="left:0px;top:37px;width:960px;height:1px;background:#F8F7F1"></div><div class="a" style="left:0px;top:36px;width:960px;height:1px;background:#C9C6B6"></div><div class="a" style="left:0px;top:54px;width:960px;height:1px;background:#D8D5C5"></div><div class="a" style="left:0px;top:55px;width:960px;height:1px;background:#F8F7F1"></div><div class="a" style="left:0px;top:72px;width:960px;height:1px;background:#D8D5C5"></div><div class="a" style="left:122px;top:39px;width:114px;height:15px;background:#fff"><div class="a" style="left:5px;top:1.500px;font-size:8.5px;letter-spacing:-0.42px;color:#111;white-space:nowrap;width:95px;overflow:hidden">Halle1 SIA S355 EB m.Schnee</div></div><svg class="a" style="left:224px;top:39px" width="12" height="15"><path d="M3 6h6l-3 3.500z" fill="#000"/></svg>
<div class="a" style="left:660px;top:57px;width:44px;height:15px;background:#fff;border:1px solid;border-color:#55534A #fff #fff #55534A;box-shadow:inset 1px 1px 0 #999"></div><div class="a" style="left:675.5px;top:59px;white-space:nowrap;font-size:9px;color:#111;width:12px;text-align:right">4</div><svg class="a" style="left:691px;top:58px" width="11" height="13"><rect x="0" y="0" width="11" height="13" fill="#ECE9D8"/><path d="M0 6.500h11" stroke="#999"/><path d="M3 4.500h5l-2.500-3zM3 8.500h5l-2.500 3z" fill="#222"/></svg><div class="a" style="left:722px;top:57px;width:45px;height:15px;background:#ECE9D8;border:1px solid;border-color:#55534A #fff #fff #55534A;box-shadow:inset 1px 1px 0 #999"></div><div class="a" style="left:738.5px;top:59px;white-space:nowrap;font-size:9px;color:#111;width:12px;text-align:right">1</div><svg class="a" style="left:754px;top:58px" width="11" height="13"><rect x="0" y="0" width="11" height="13" fill="#ECE9D8"/><path d="M0 6.500h11" stroke="#999"/><path d="M3 4.500h5l-2.500-3zM3 8.500h5l-2.500 3z" fill="#222"/></svg>
<!-- left panel -->
<div class="a ph" style="left:0px;top:90px;width:94px;height:13px;">Menübaum</div><svg class="a" style="left:66px;top:90px" width="28" height="13" viewBox="0 0 28 13"><path d="M5.500 3.500h3v4h-3zM4 7.500h6M7 8v3" fill="none" stroke="#E8EEFC" stroke-width="1.2"/><path d="M18 3.500l6 6M24 3.500l-6 6" stroke="#fff" stroke-width="1.5"/></svg>
<div class="a" style="left:2px;top:106px;width:92px;height:562px;background:#fff;border:1px solid;border-color:#8C8A7C #fff #fff #8C8A7C;box-shadow:inset 1px 1px 0 #5A584E"></div><div class="a" style="left:94px;top:90px;width:2px;height:594px;background:#ECE9D8;border-right:1px solid #C5C2B2"></div><svg class="a" style="left:0;top:106px" width="96" height="160" viewBox="0 106 96 160"><path d="M12.500 113v136" stroke="#C4C4C4" stroke-width="1" stroke-dasharray="1 1" fill="none"/><path d="M13 113.3h8" stroke="#C4C4C4" stroke-width="1" stroke-dasharray="1 1" fill="none"/><g transform="translate(26,113.3) scale(0.9) translate(-6,-6)"><rect x="2.5" y="1.5" width="9" height="9" fill="#fff" stroke="#222" stroke-width="1.4"/><path d="M4 9l6-6M5 9h4" fill="none" stroke="#2A2A8C" stroke-width="1.2"/><rect x="3" y="1" width="8" height="1.5" fill="#3038C8"/></g><path d="M13 124.5h8" stroke="#C4C4C4" stroke-width="1" stroke-dasharray="1 1" fill="none"/><g transform="translate(26,124.5) scale(0.9) translate(-6,-6)"><path d="M3 1v10M6 1v10M9 1v10" fill="none" stroke="#3038C8" stroke-width="1.6"/><path d="M0 4h12M0 8h12" fill="none" stroke="#9090E0" stroke-width="1" stroke-dasharray="1.5 1"/></g><path d="M13 135.8h8" stroke="#C4C4C4" stroke-width="1" stroke-dasharray="1 1" fill="none"/><g transform="translate(26,135.8) scale(0.9) translate(-6,-6)"><path d="M1.500 11v-7h9v7M3 4v-2h2v2M7 4v-2h2v2" fill="none" stroke="#222" stroke-width="1.1"/><path d="M4 7h4" fill="none" stroke="#888" stroke-width="1"/></g><path d="M13 147.1h8" stroke="#C4C4C4" stroke-width="1" stroke-dasharray="1 1" fill="none"/><g transform="translate(26,147.1) scale(0.9) translate(-6,-6)"><path d="M2 1v7" fill="none" stroke="#2A2A8C" stroke-width="2"/><path d="M0 10.500h12" fill="none" stroke="#222" stroke-width="1.2"/><path d="M5 10v-3l2 1v2M8 10v-4l2 -1v5" fill="none" stroke="#2A2A8C" stroke-width="1"/></g><path d="M13 158.3h8" stroke="#C4C4C4" stroke-width="1" stroke-dasharray="1 1" fill="none"/><rect x="10" y="155.8" width="5" height="5" fill="#fff" stroke="#8C8C8C" stroke-width="0.9"/><path d="M11 158.3h3M12.500 156.8v3" stroke="#000" stroke-width="0.8"/><g transform="translate(26,158.3) scale(0.9) translate(-6,-6)"><path d="M2 1v7" fill="none" stroke="#2A2A8C" stroke-width="2"/><path d="M0 10.500h12" fill="none" stroke="#222" stroke-width="1.2"/><circle cx="8" cy="4" r="2.2" fill="none" stroke="#222" stroke-width="1"/><path d="M6 9l2-3 2 3z" fill="none" stroke="#222" stroke-width="1"/></g><path d="M13 169.6h8" stroke="#C4C4C4" stroke-width="1" stroke-dasharray="1 1" fill="none"/><rect x="10" y="167.1" width="5" height="5" fill="#fff" stroke="#8C8C8C" stroke-width="0.9"/><path d="M11 169.6h3M12.500 168.1v3" stroke="#000" stroke-width="0.8"/><g transform="translate(26,169.6) scale(0.9) translate(-6,-6)"><circle cx="6" cy="6" r="5" fill="#30D030" stroke="#187018" stroke-width="1"/><circle cx="4.5" cy="4.5" r="1.5" fill="#B0FFB0"/></g><path d="M13 180.8h8" stroke="#C4C4C4" stroke-width="1" stroke-dasharray="1 1" fill="none"/><rect x="10" y="178.3" width="5" height="5" fill="#fff" stroke="#8C8C8C" stroke-width="0.9"/><path d="M11 180.8h3M12.500 179.3v3" stroke="#000" stroke-width="0.8"/><g transform="translate(26,180.8) scale(0.9) translate(-6,-6)"><rect x="2.5" y="0.5" width="8" height="11" fill="#E8E8C0" stroke="#222" stroke-width="1"/><rect x="4" y="2" width="5" height="3" fill="#4060E0"/><path d="M4 7h5M4 9h5" fill="none" stroke="#222" stroke-width="1"/></g><path d="M13 192.1h8" stroke="#C4C4C4" stroke-width="1" stroke-dasharray="1 1" fill="none"/><g transform="translate(26,192.1) scale(0.9) translate(-6,-6)"><path d="M2 1v10M2 3h8M2 7h8" fill="none" stroke="#6E6E10" stroke-width="2.4"/><path d="M2 1v10M2 3h8M2 7h8" fill="none" stroke="#E0E030" stroke-width="1"/></g><path d="M13 203.3h8" stroke="#C4C4C4" stroke-width="1" stroke-dasharray="1 1" fill="none"/><g transform="translate(26,203.3) scale(0.9) translate(-6,-6)"><path d="M1 1h10v3h-3l-1 7h-2l-1-7h-3z" fill="#30D0E0" stroke="#1080A0" stroke-width="1"/></g><path d="M13 214.6h8" stroke="#C4C4C4" stroke-width="1" stroke-dasharray="1 1" fill="none"/><g transform="translate(26,214.6) scale(0.9) translate(-6,-6)"><path d="M1 3c2-2 4-2 5 0 1-2 3-2 5 0v8c-2-2-4-2-5 0-1-2-3-2-5 0z" fill="#F0E080" stroke="#222" stroke-width="1"/><path d="M6 3v8" fill="none" stroke="#222" stroke-width="1"/></g><path d="M13 225.8h8" stroke="#C4C4C4" stroke-width="1" stroke-dasharray="1 1" fill="none"/><rect x="10" y="223.3" width="5" height="5" fill="#fff" stroke="#8C8C8C" stroke-width="0.9"/><path d="M11 225.8h3M12.500 224.3v3" stroke="#000" stroke-width="0.8"/><g transform="translate(26,225.8) scale(0.9) translate(-6,-6)"><path d="M1 11l2-9 8 9z" fill="#A0C0E0" stroke="#2A2A8C" stroke-width="1"/><path d="M6 7l5-6" fill="none" stroke="#30A030" stroke-width="1.6"/></g><path d="M13 237.1h8" stroke="#C4C4C4" stroke-width="1" stroke-dasharray="1 1" fill="none"/><rect x="10" y="234.6" width="5" height="5" fill="#fff" stroke="#8C8C8C" stroke-width="0.9"/><path d="M11 237.1h3M12.500 235.6v3" stroke="#000" stroke-width="0.8"/><g transform="translate(26,237.1) scale(0.9) translate(-6,-6)"><rect x="2.5" y="2.5" width="7" height="9" fill="#666" stroke="#222" stroke-width="1"/><rect x="4.5" y="0.5" width="7" height="9" fill="#999" stroke="#222" stroke-width="1"/><path d="M4 5h4M4 8h4" fill="none" stroke="#ddd" stroke-width="1"/></g><path d="M13 248.3h8" stroke="#C4C4C4" stroke-width="1" stroke-dasharray="1 1" fill="none"/><rect x="10" y="245.8" width="5" height="5" fill="#fff" stroke="#8C8C8C" stroke-width="0.9"/><path d="M11 248.3h3M12.500 246.8v3" stroke="#000" stroke-width="0.8"/><g transform="translate(26,248.3) scale(0.9) translate(-6,-6)"><path d="M1 1l9 10M3 1l-2 2" fill="none" stroke="#222" stroke-width="1.8"/><path d="M11 1l-9 10" fill="none" stroke="#B08020" stroke-width="1.8"/><path d="M8 0l4 4" fill="none" stroke="#222" stroke-width="2"/></g></svg>
<div class="a tr" style="left:36.500px;top:108.3px;width:54px;overflow:hidden">Projekt</div><div class="a tr" style="left:36.500px;top:119.5px;width:54px;overflow:hidden">Linienraster und Geschosse</div><div class="a tr" style="left:36.500px;top:130.8px;width:54px;overflow:hidden">Struktur</div><div class="a tr" style="left:36.500px;top:142.1px;width:54px;overflow:hidden">Belastung</div><div class="a tr" style="left:36.500px;top:153.3px;width:54px;overflow:hidden">Lastfälle, LF-Kombinationen</div><div class="a tr" style="left:36.500px;top:164.6px;width:54px;overflow:hidden">Dynamik</div><div class="a tr" style="left:36.500px;top:175.8px;width:54px;overflow:hidden">Berechnung, FE-Netz</div><div class="a tr" style="left:36.500px;top:187.1px;width:54px;overflow:hidden">Stahl</div><div class="a tr" style="left:36.500px;top:198.3px;width:54px;overflow:hidden">Beton</div><div class="a tr" style="left:36.500px;top:209.6px;width:54px;overflow:hidden">Dokument</div><div class="a tr" style="left:36.500px;top:220.8px;width:54px;overflow:hidden">Zeichnungswerkzeuge</div><div class="a tr" style="left:36.500px;top:232.1px;width:54px;overflow:hidden">Bibliotheken</div><div class="a tr" style="left:36.500px;top:243.3px;width:54px;overflow:hidden">Werkzeuge</div>
<div class="a" style="left:4px;top:655px;width:86px;height:12px;background:#F6F5F0"></div><div class="a" style="left:4px;top:655px;width:12px;height:12px;background:#C3D3FC;border:1px solid #B0C2F2;border-radius:2px"></div><div class="a" style="left:77px;top:655px;width:12px;height:12px;background:#C3D3FC;border:1px solid #B0C2F2;border-radius:2px"></div><div class="a" style="left:20px;top:655px;width:34px;height:12px;background:#C3D3FC;border:1px solid #B0C2F2;border-radius:2px"></div><svg class="a" style="left:4px;top:655px" width="86" height="12"><path d="M7.500 3.500l-2.500 2.500 2.500 2.500M78.500 3.500l2.500 2.500-2.500 2.500" fill="none" stroke="#4D6185" stroke-width="1.5"/><path d="M34 4v4M36 4v4M38 4v4" stroke="#EEF4FE" stroke-width="1"/></svg>
<div class="a" style="left:5px;top:669px;width:21px;height:15px;background:#FBFAF6;border:1px solid #8C8A7C;border-top:none;border-radius:0 0 3px 3px;box-shadow:1px 1px 0 #B5B2A2"></div><svg class="a" style="left:8px;top:671px" width="14" height="11"><path d="M1 1h3v3h-3zM2.500 4v5h3" fill="none" stroke="#222" stroke-width="1"/><rect x="6" y="3" width="5" height="3" fill="#E03030"/><rect x="6" y="7" width="5" height="3" fill="#30B0C0"/></svg>
<!-- canvas -->
<div class="a" style="left:96px;top:91px;width:770px;height:2px;background:#ACA899"></div><div class="a" style="left:96px;top:91px;width:2px;height:520px;background:#ACA899"></div><div class="a" style="left:98px;top:93px;width:752px;height:503px;background:#fff"></div><svg class="a" style="left:98px;top:93px" width="752" height="503" viewBox="98 93 752 503" font-family="Liberation Sans, sans-serif"><path d="M175.0 404.0L372.5 466.5L446.0 460.0L520.0 452.5L782.6 271.4L645.0 227.7L417.5 387.3L415.0 387.0L265.0 343.0Z" fill="#D2D2D2"/><path d="M175.0 404.0L372.5 466.5L446.0 460.0L520.0 452.5L782.6 271.4L645.0 227.7" fill="none" stroke="#A4A4A4" stroke-width="1.1"/><path d="M265.5 341.8L417.5 387.3M298.0 319.0L450.0 364.5M330.5 296.2L482.5 341.7M363.0 273.4L515.0 318.9M395.5 250.6L547.5 296.1M428.0 227.8L580.0 273.3M460.5 205.0L612.5 250.5M493.0 182.2L645.0 227.7M265.0 337.0L493.0 182.2M315.0 352.0L542.3 197.2M364.0 367.0L591.6 212.2M413.0 382.0L640.9 227.2M249.0 338.0L480.4 181.7M480.4 181.7L493.0 185.5M372.5 466.5L459.0 493.0M459.0 493.0L520.0 452.5" fill="none" stroke="#444" stroke-width="1.15" stroke-dasharray="8.5 10"/><path d="M417.5 387.3L552.5 429.7M450.0 364.5L584.0 408.9M482.5 341.7L616.0 386.1M515.0 318.9L649.5 363.8M547.5 296.1L683.3 340.9M580.0 273.3L715.8 317.6M612.5 250.5L750.5 294.2M645.0 227.7L782.6 271.4M453.9 410.4L694.1 243.3M490.4 433.6L743.3 258.9M175.0 404.0L265.0 343.0M225.0 420.0L315.0 358.0M274.0 435.5L364.0 373.0M322.5 451.0L415.0 387.0M372.5 466.5L417.5 387.3M220.0 373.5L395.0 426.9M383.8 446.7L427.1 460.4M395.0 426.9L482.2 454.5M406.2 407.1L528.4 445.8" fill="none" stroke="#4a4a4a" stroke-width="0.9" stroke-dasharray="8.5 10" opacity="0.9"/><path d="M225.0 400.0L303.7 395.2M274.0 415.0L254.7 380.4M254.7 380.4L333.4 375.4M303.7 395.2L284.4 360.7M284.4 360.7L364.0 355.0M333.4 375.4L315.0 340.5M225.0 400.0L274.0 435.5M274.0 415.0L225.0 420.0M315.0 338.0L364.0 372.0M364.0 353.0L315.0 357.0M297.0 352.4L364.0 353.0M346.0 367.0L315.0 338.0M450.0 346.1L505.0 325.2M482.5 323.4L472.6 347.9M472.6 347.9L527.4 329.2M505.0 325.2L495.1 351.8M495.1 351.8L549.8 335.2M527.4 329.2L517.5 357.8M517.5 357.8L571.9 343.4M549.8 335.2L539.8 365.9M539.8 365.9L594.0 353.6M571.9 343.4L561.9 376.2M561.9 376.2L616.0 366.0M594.0 353.6L584.0 388.5M482.5 323.4L537.7 302.6M515.0 300.7L505.0 325.2M505.0 325.2L560.3 306.7M537.7 302.6L527.4 329.2M527.4 329.2L582.8 312.9M560.3 306.7L549.8 335.2M549.8 335.2L605.1 321.1M582.8 312.9L571.9 343.4M571.9 343.4L627.4 331.5M605.1 321.1L594.0 353.6M594.0 353.6L649.5 344.0M627.4 331.5L616.0 366.0M616.0 366.0L649.5 363.8M649.5 344.0L616.0 386.1M715.8 298.4L750.5 294.2M750.5 275.3L715.8 317.6M584.0 388.5L616.0 386.1M616.0 366.0L584.0 408.9M450.0 346.1L482.5 341.7M482.5 323.4L450.0 364.5M482.5 323.4L515.0 318.9M515.0 300.7L482.5 341.7" fill="none" stroke="#444" stroke-width="0.7"/><path d="M175.0 386.0L265.0 327.0M225.0 400.0L315.0 340.5M274.0 415.0L364.0 355.0M322.5 430.0L415.0 368.5M446.0 440.0L417.5 368.8M372.5 445.0L485.5 379.4" fill="none" stroke="#50577E" stroke-width="2"/><path d="M372.5 445.0L417.5 368.8" fill="none" stroke="#474E78" stroke-width="2.2"/><path d="M372.5 445.0L446.0 440.0M446.0 440.0L520.0 431.5" fill="none" stroke="#4A4AB0" stroke-width="2.6"/><path d="M372.5 445.0L446.0 440.0M446.0 440.0L520.0 431.5" fill="none" stroke="#2F6B33" stroke-width="1.6" stroke-dasharray="3 3"/><path d="M645.0 209.9L714.4 218.4L782.6 252.8" fill="none" stroke="#3E3E90" stroke-width="2.4"/><path d="M417.5 368.8L645.0 209.9M520.0 431.5L782.6 252.8" fill="none" stroke="#3E4A40" stroke-width="2"/><path d="M645.0 209.9L417.5 368.8M656.6 210.6L423.8 372.7M668.2 211.8L430.6 376.8M679.8 213.5L437.7 381.2M691.3 215.8L445.2 385.8M702.8 218.5L453.1 390.6M714.3 221.9L461.5 395.7M725.8 225.7L470.2 401.0M737.2 230.1L479.3 406.6M748.6 235.0L488.8 412.4M759.9 240.4L498.7 418.4M771.3 246.3L508.9 424.7M782.6 252.8L519.6 431.3" fill="none" stroke="#3E4A40" stroke-width="1.75"/><path d="M640.0 208.4L412.5 367.3M635.0 206.9L407.5 365.8" fill="none" stroke="#3E4A40" stroke-width="1.1"/><path d="M159.2 381.0L372.5 445.0M166.6 376.2L376.2 438.8M173.9 371.4L379.8 432.6M181.3 366.6L383.5 426.4M188.6 361.8L387.2 420.1M195.9 357.0L390.8 413.9M203.3 352.1L394.5 407.7M210.6 347.3L398.2 401.5M217.9 342.5L401.9 395.3M225.3 337.7L405.5 389.1M232.6 332.9L409.2 382.9M240.0 328.1L412.9 376.7M247.3 323.3L416.5 370.4M254.6 318.5L420.2 364.2M387.4 419.9L436.6 416.5M436.6 416.5L486.2 410.8M400.4 397.8L428.3 395.9M428.3 395.9L456.4 392.6" fill="none" stroke="#47824D" stroke-width="2.3"/><path d="M159.2 381.0L372.5 445.0M166.6 376.2L376.2 438.8M173.9 371.4L379.8 432.6M181.3 366.6L383.5 426.4M188.6 361.8L387.2 420.1M195.9 357.0L390.8 413.9M203.3 352.1L394.5 407.7M210.6 347.3L398.2 401.5M217.9 342.5L401.9 395.3M225.3 337.7L405.5 389.1M232.6 332.9L409.2 382.9M240.0 328.1L412.9 376.7M247.3 323.3L416.5 370.4M254.6 318.5L420.2 364.2M387.4 419.9L436.6 416.5M436.6 416.5L486.2 410.8M400.4 397.8L428.3 395.9M428.3 395.9L456.4 392.6" fill="none" stroke="#1C4420" stroke-width="2.3" stroke-dasharray="1.2 2" opacity="0.65"/><path d="M417.5 368.8L428.9 369.2L440.3 370.2L451.6 371.7L462.9 373.8L474.2 376.3L485.5 379.4L496.7 383.0L507.9 387.2L519.1 391.8L530.3 397.0L541.4 402.7L552.5 409.0M450.0 346.1L461.3 346.7L472.6 347.9L483.9 349.6L495.1 351.8L506.3 354.5L517.5 357.8L528.7 361.6L539.8 365.9L550.9 370.8L561.9 376.2L573.0 382.1L584.0 388.5M482.5 323.4L493.8 324.0L505.0 325.2L516.2 326.9L527.4 329.2L538.6 331.9L549.8 335.2L560.9 339.0L571.9 343.4L583.0 348.2L594.0 353.6L605.0 359.5L616.0 366.0M515.0 300.7L526.4 301.4L537.7 302.6L549.0 304.4L560.3 306.7L571.5 309.5L582.8 312.9L593.9 316.7L605.1 321.1L616.2 326.1L627.4 331.5L638.4 337.5L649.5 344.0M547.5 278.0L559.0 278.7L570.4 280.0L581.8 281.7L593.2 284.0L604.6 286.8L615.9 290.2L627.2 294.1L638.5 298.5L649.7 303.4L660.9 308.9L672.1 314.9L683.3 321.4M580.0 255.3L591.5 256.0L602.9 257.2L614.3 258.9L625.7 261.2L637.1 264.0L648.4 267.4L659.7 271.2L671.0 275.6L682.2 280.5L693.4 285.9L704.6 291.9L715.8 298.4M612.5 232.6L624.2 233.3L635.8 234.4L647.4 236.2L658.9 238.4L670.5 241.2L682.0 244.4L693.5 248.3L704.9 252.6L716.4 257.5L727.8 262.9L739.2 268.8L750.5 275.3M520.0 431.5L417.5 368.8" fill="none" stroke="#40409A" stroke-width="2.5"/><path d="M417.5 368.8L428.9 369.2L440.3 370.2L451.6 371.7L462.9 373.8L474.2 376.3L485.5 379.4L496.7 383.0L507.9 387.2L519.1 391.8L530.3 397.0L541.4 402.7L552.5 409.0M450.0 346.1L461.3 346.7L472.6 347.9L483.9 349.6L495.1 351.8L506.3 354.5L517.5 357.8L528.7 361.6L539.8 365.9L550.9 370.8L561.9 376.2L573.0 382.1L584.0 388.5M482.5 323.4L493.8 324.0L505.0 325.2L516.2 326.9L527.4 329.2L538.6 331.9L549.8 335.2L560.9 339.0L571.9 343.4L583.0 348.2L594.0 353.6L605.0 359.5L616.0 366.0M515.0 300.7L526.4 301.4L537.7 302.6L549.0 304.4L560.3 306.7L571.5 309.5L582.8 312.9L593.9 316.7L605.1 321.1L616.2 326.1L627.4 331.5L638.4 337.5L649.5 344.0M547.5 278.0L559.0 278.7L570.4 280.0L581.8 281.7L593.2 284.0L604.6 286.8L615.9 290.2L627.2 294.1L638.5 298.5L649.7 303.4L660.9 308.9L672.1 314.9L683.3 321.4M580.0 255.3L591.5 256.0L602.9 257.2L614.3 258.9L625.7 261.2L637.1 264.0L648.4 267.4L659.7 271.2L671.0 275.6L682.2 280.5L693.4 285.9L704.6 291.9L715.8 298.4M612.5 232.6L624.2 233.3L635.8 234.4L647.4 236.2L658.9 238.4L670.5 241.2L682.0 244.4L693.5 248.3L704.9 252.6L716.4 257.5L727.8 262.9L739.2 268.8L750.5 275.3M520.0 431.5L417.5 368.8" fill="none" stroke="#5A5ABC" stroke-width="0.6"/><path d="M175.0 386.0L265.0 327.0M225.0 400.0L315.0 340.5M274.0 415.0L364.0 355.0M322.5 430.0L415.0 368.5M446.0 440.0L417.5 368.8M372.5 445.0L485.5 379.4M372.5 445.0L417.5 368.8" fill="none" stroke="#474E78" stroke-width="1.8" opacity="0.7"/><path d="M175.0 386.0L175.0 404.0M225.0 400.0L225.0 420.0M274.0 415.0L274.0 435.5M322.5 430.0L322.5 451.0M372.5 445.0L372.5 466.5M417.5 368.8L417.5 387.3M450.0 346.1L450.0 364.5M482.5 323.4L482.5 341.7M515.0 300.7L515.0 318.9M547.5 278.0L547.5 296.1M580.0 255.3L580.0 273.3M612.5 232.6L612.5 250.5M645.0 209.9L645.0 227.7M520.0 431.5L520.0 452.5M552.5 409.0L552.5 429.7M584.0 388.5L584.0 408.9M616.0 366.0L616.0 386.1M649.5 344.0L649.5 363.8M683.3 321.4L683.3 340.9M715.8 298.4L715.8 317.6M750.5 275.3L750.5 294.2M782.6 252.8L782.6 271.4" fill="none" stroke="#4848B4" stroke-width="3.4"/><path d="M175.0 386.0L175.0 404.0M225.0 400.0L225.0 420.0M274.0 415.0L274.0 435.5M322.5 430.0L322.5 451.0M372.5 445.0L372.5 466.5M417.5 368.8L417.5 387.3M450.0 346.1L450.0 364.5M482.5 323.4L482.5 341.7M515.0 300.7L515.0 318.9M547.5 278.0L547.5 296.1M580.0 255.3L580.0 273.3M612.5 232.6L612.5 250.5M645.0 209.9L645.0 227.7M520.0 431.5L520.0 452.5M552.5 409.0L552.5 429.7M584.0 388.5L584.0 408.9M616.0 366.0L616.0 386.1M649.5 344.0L649.5 363.8M683.3 321.4L683.3 340.9M715.8 298.4L715.8 317.6M750.5 275.3L750.5 294.2M782.6 252.8L782.6 271.4" fill="none" stroke="#8484E8" stroke-width="1.1" transform="translate(0.6,0)"/><path d="M446.0 440.0L446.0 460.0" fill="none" stroke="#33364A" stroke-width="1.7"/><path d="M265.0 327.0L265.0 343.0M315.0 340.5L315.0 358.0M364.0 355.0L364.0 373.0M265.0 322.0L265.0 343.0M315.0 337.0L315.0 358.0M364.0 352.0L364.0 373.0M315.0 338.0L364.0 353.0" fill="none" stroke="#3C4460" stroke-width="2.4"/><path d="M417.5 369.3L426.5 370.8M450.0 346.6L459.0 348.1M482.5 323.9L491.5 325.4M515.0 301.2L524.0 302.7M547.5 278.5L556.5 280.0M580.0 255.8L589.0 257.3M612.5 233.1L621.5 234.6M645.0 210.4L654.0 211.9" fill="none" stroke="#4A4AAE" stroke-width="2.2"/><path d="M148.0 401.2L456.0 495.5M144.0 405.6L451.0 499.7M456.0 495.5L451.0 499.7M148.0 401.2L144.0 405.6M169.0 408.0L163.0 414.0M219.0 424.0L213.0 430.0M268.0 439.5L262.0 445.5M316.5 455.0L310.5 461.0M366.5 470.5L360.5 476.5M479.8 497.7L801.5 278.0M473.5 494.3L789.5 275.0M789.5 275.0L801.5 278.0M473.5 494.3L479.8 497.7M526.0 454.5L541.0 459.0M558.5 431.7L573.5 436.2M590.0 410.9L605.0 415.4M622.0 388.1L637.0 392.6M655.5 365.8L670.5 370.3M689.3 342.9L704.3 347.4M721.8 319.6L736.8 324.1M756.5 296.2L771.5 300.7M788.6 273.4L803.6 277.9" fill="none" stroke="#222" stroke-width="0.9"/><ellipse cx="140" cy="413" rx="3.6" ry="2.6" fill="#fff" stroke="#444" stroke-width="0.7"/><text x="140" y="414.4" font-size="3.6" text-anchor="middle" fill="#222">A</text><ellipse cx="157" cy="418" rx="3.6" ry="2.6" fill="#fff" stroke="#444" stroke-width="0.7"/><text x="157" y="419.4" font-size="3.6" text-anchor="middle" fill="#222">1</text><ellipse cx="206" cy="433" rx="3.6" ry="2.6" fill="#fff" stroke="#444" stroke-width="0.7"/><text x="206" y="434.4" font-size="3.6" text-anchor="middle" fill="#222">2</text><ellipse cx="256" cy="448" rx="3.6" ry="2.6" fill="#fff" stroke="#444" stroke-width="0.7"/><text x="256" y="449.4" font-size="3.6" text-anchor="middle" fill="#222">3</text><ellipse cx="305" cy="462.5" rx="3.6" ry="2.6" fill="#fff" stroke="#444" stroke-width="0.7"/><text x="305" y="463.9" font-size="3.6" text-anchor="middle" fill="#222">4</text><ellipse cx="355" cy="478" rx="3.6" ry="2.6" fill="#fff" stroke="#444" stroke-width="0.7"/><text x="355" y="479.4" font-size="3.6" text-anchor="middle" fill="#222">5</text><ellipse cx="374.5" cy="483.8" rx="3.6" ry="2.6" fill="#fff" stroke="#444" stroke-width="0.7"/><text x="374.5" y="485.2" font-size="3.6" text-anchor="middle" fill="#222">6</text><ellipse cx="443" cy="504.5" rx="3.6" ry="2.6" fill="#fff" stroke="#444" stroke-width="0.7"/><text x="443" y="505.9" font-size="3.6" text-anchor="middle" fill="#222">9</text><ellipse cx="487.7" cy="500.4" rx="3.6" ry="2.6" fill="#fff" stroke="#444" stroke-width="0.7"/><text x="487.7" y="501.79999999999995" font-size="3.6" text-anchor="middle" fill="#222">8</text><ellipse cx="533" cy="469.6" rx="3.6" ry="2.6" fill="#fff" stroke="#444" stroke-width="0.7"/><text x="533" y="471.0" font-size="3.6" text-anchor="middle" fill="#222">B</text><ellipse cx="546" cy="460" rx="3.6" ry="2.6" fill="#fff" stroke="#444" stroke-width="0.7"/><text x="546" y="461.4" font-size="3.6" text-anchor="middle" fill="#222">C</text><ellipse cx="579" cy="438" rx="3.6" ry="2.6" fill="#fff" stroke="#444" stroke-width="0.7"/><text x="579" y="439.4" font-size="3.6" text-anchor="middle" fill="#222">D</text><ellipse cx="611.7" cy="415.8" rx="3.6" ry="2.6" fill="#fff" stroke="#444" stroke-width="0.7"/><text x="611.7" y="417.2" font-size="3.6" text-anchor="middle" fill="#222">E</text><ellipse cx="644.8" cy="393.4" rx="3.6" ry="2.6" fill="#fff" stroke="#444" stroke-width="0.7"/><text x="644.8" y="394.79999999999995" font-size="3.6" text-anchor="middle" fill="#222">F</text><ellipse cx="678" cy="370.8" rx="3.6" ry="2.6" fill="#fff" stroke="#444" stroke-width="0.7"/><text x="678" y="372.2" font-size="3.6" text-anchor="middle" fill="#222">G</text><ellipse cx="710.8" cy="348" rx="3.6" ry="2.6" fill="#fff" stroke="#444" stroke-width="0.7"/><text x="710.8" y="349.4" font-size="3.6" text-anchor="middle" fill="#222">H</text><ellipse cx="743.8" cy="326" rx="3.6" ry="2.6" fill="#fff" stroke="#444" stroke-width="0.7"/><text x="743.8" y="327.4" font-size="3.6" text-anchor="middle" fill="#222">I</text><ellipse cx="777" cy="303.5" rx="3.6" ry="2.6" fill="#fff" stroke="#444" stroke-width="0.7"/><text x="777" y="304.9" font-size="3.6" text-anchor="middle" fill="#222">J</text><ellipse cx="809.8" cy="280.8" rx="3.6" ry="2.6" fill="#fff" stroke="#444" stroke-width="0.7"/><text x="809.8" y="282.2" font-size="3.6" text-anchor="middle" fill="#222">K</text><text x="186.0" y="414.1" font-size="3" font-weight="bold" fill="#000" stroke="#000" stroke-width="0.15" transform="rotate(17 186.0 414.1)">6000</text><text x="235.5" y="429.3" font-size="3" font-weight="bold" fill="#000" stroke="#000" stroke-width="0.15" transform="rotate(17 235.5 429.3)">6000</text><text x="284.2" y="444.2" font-size="3" font-weight="bold" fill="#000" stroke="#000" stroke-width="0.15" transform="rotate(17 284.2 444.2)">6000</text><text x="333.5" y="459.3" font-size="3" font-weight="bold" fill="#000" stroke="#000" stroke-width="0.15" transform="rotate(17 333.5 459.3)">6000</text><text x="545.2" y="447.1" font-size="3" font-weight="bold" fill="#000" stroke="#000" stroke-width="0.15" transform="rotate(-34 545.2 447.1)">6000</text><text x="577.2" y="425.3" font-size="3" font-weight="bold" fill="#000" stroke="#000" stroke-width="0.15" transform="rotate(-34 577.2 425.3)">6000</text><text x="609.0" y="403.5" font-size="3" font-weight="bold" fill="#000" stroke="#000" stroke-width="0.15" transform="rotate(-34 609.0 403.5)">6000</text><text x="641.8" y="381.0" font-size="3" font-weight="bold" fill="#000" stroke="#000" stroke-width="0.15" transform="rotate(-34 641.8 381.0)">6000</text><text x="675.4" y="358.4" font-size="3" font-weight="bold" fill="#000" stroke="#000" stroke-width="0.15" transform="rotate(-34 675.4 358.4)">6000</text><text x="708.5" y="335.2" font-size="3" font-weight="bold" fill="#000" stroke="#000" stroke-width="0.15" transform="rotate(-34 708.5 335.2)">6000</text><text x="742.1" y="311.9" font-size="3" font-weight="bold" fill="#000" stroke="#000" stroke-width="0.15" transform="rotate(-34 742.1 311.9)">6000</text><text x="775.5" y="288.8" font-size="3" font-weight="bold" fill="#000" stroke="#000" stroke-width="0.15" transform="rotate(-34 775.5 288.8)">6000</text><path d="M156 375.500v25.500" stroke="#1818E0" stroke-width="3" fill="none"/><path d="M158 401l24 6.500M176 402.500l7 5-9 1.500" stroke="#E03030" stroke-width="1" fill="none"/><path d="M190 405l8 7M198 405.500l-9 6.500" stroke="#E01818" stroke-width="1.5" fill="none"/><path d="M160 397c2-6 8-8 14-8M181 384l6 1.500-5 3.500z" stroke="#30C040" stroke-width="1" fill="none"/><path d="M127 563v-18" stroke="#3030C0" stroke-width="1" fill="none"/><path d="M127 563l12.500-6" stroke="#30A040" stroke-width="1" fill="none"/><path d="M127 563l18 8" stroke="#D03030" stroke-width="1" fill="none"/><text x="128.500" y="551" font-size="6.500" fill="#3030C0">z</text><text x="141" y="560" font-size="6.500" fill="#30A040">Y</text><text x="146.500" y="576" font-size="6.500" fill="#D03030">X</text></svg>
<div class="a" style="left:850px;top:93px;width:15px;height:503px;background:linear-gradient(90deg,#F3F1EC,#FEFEFB)"></div><div class="a" style="left:852px;top:93px;width:12px;height:11px;background:#C3D3FC;border:1px solid #B0C2F2;border-radius:2px"></div><div class="a" style="left:852px;top:498px;width:12px;height:11px;background:#C3D3FC;border:1px solid #B0C2F2;border-radius:2px"></div><div class="a" style="left:852px;top:296px;width:12px;height:12px;background:#C3D3FC;border:1px solid #B0C2F2;border-radius:2px"></div><svg class="a" style="left:850px;top:92px" width="14" height="420"><path d="M5 8l3-3 3 3M5 409.500l3 3 3-3" fill="none" stroke="#4D6185" stroke-width="1.6"/></svg>
<div class="a" style="left:850px;top:511px;width:14px;height:84px;background:repeating-linear-gradient(180deg,#3A3A3A 0,#3A3A3A 1px,#6E6E6E 1px,#6E6E6E 2px);border:1px solid #222;box-shadow:inset 0 0 0 1px #9a9a9a,inset 0 0 0 2px #222"></div><div class="a" style="left:98px;top:596px;width:752px;height:15px;background:#ECE9D8"></div><div class="a" style="left:304px;top:597px;width:393px;height:12px;background:linear-gradient(#F6F5F1,#FFFFFE 5px)"></div><div class="a" style="left:291px;top:597px;width:12px;height:12px;background:#C3D3FC;border:1px solid #B0C2F2;border-radius:2px"></div><div class="a" style="left:697px;top:597px;width:12px;height:12px;background:#C3D3FC;border:1px solid #B0C2F2;border-radius:2px"></div><div class="a" style="left:497px;top:597px;width:11px;height:12px;background:#C3D3FC;border:1px solid #B0C2F2;border-radius:2px"></div><svg class="a" style="left:291px;top:597px" width="420" height="12"><path d="M7.500 3l-3 3 3 3M410.500 3l3 3-3 3" fill="none" stroke="#4D6185" stroke-width="1.6"/></svg>
<div class="a" style="left:710px;top:595px;width:70px;height:15px;background:repeating-linear-gradient(90deg,#3A3A3A 0,#3A3A3A 1px,#6E6E6E 1px,#6E6E6E 2px);border:1px solid #222;box-shadow:inset 0 0 0 1px #9a9a9a,inset 0 0 0 2px #222"></div><div class="a" style="left:781px;top:595px;width:69px;height:15px;background:repeating-linear-gradient(90deg,#3A3A3A 0,#3A3A3A 1px,#6E6E6E 1px,#6E6E6E 2px);border:1px solid #222;box-shadow:inset 0 0 0 1px #9a9a9a,inset 0 0 0 2px #222"></div><div class="a" style="left:100px;top:597px;width:15px;height:14px;background:#F4F3EC"></div><div class="a" style="left:115px;top:597px;width:15px;height:14px;background:#F4F3EC"></div><div class="a" style="left:134px;top:597px;width:15px;height:14px;background:#F4F3EC"></div><div class="a" style="left:150px;top:597px;width:15px;height:14px;background:#F4F3EC"></div><div class="a" style="left:165px;top:597px;width:15px;height:14px;background:#F4F3EC"></div><div class="a" style="left:186px;top:597px;width:15px;height:14px;background:#F4F3EC"></div><div class="a" style="left:203px;top:597px;width:15px;height:14px;background:#F4F3EC"></div><div class="a" style="left:222px;top:597px;width:15px;height:14px;background:#F4F3EC"></div><div class="a" style="left:240px;top:597px;width:15px;height:14px;background:#F4F3EC"></div><div class="a" style="left:257px;top:597px;width:15px;height:14px;background:#F4F3EC"></div><div class="a" style="left:273px;top:597px;width:15px;height:14px;background:#F4F3EC"></div><div class="a" style="left:115px;top:596px;width:15px;height:15px;background:#FBFAF7;border:1px solid;border-color:#9C9A8C #fff #fff #9C9A8C"></div><div class="a" style="left:100px;top:596px;width:15px;height:15px;background:#F8F7F2;border:1px solid;border-color:#B5B2A2 #fff #fff #B5B2A2"></div><svg class="a" style="left:0;top:597px" width="300" height="14" viewBox="0 597 300 14"><g transform="translate(100,597)"><path d="M3 9l4-5h5l-4 5z M3 9v3h5v-3M8 12l4-5v-3" fill="#fff" stroke="#222" stroke-width="1.1"/></g><g transform="translate(115,597)"><path d="M3 9l4-5h5l-4 5z" fill="#F0F040" stroke="#222" stroke-width="1.1"/><path d="M3 9v3h5v-3z" fill="#C0C020" stroke="#222" stroke-width="1.1"/><path d="M8 12l4-5v-3l-4 5z" fill="#909010" stroke="#222" stroke-width="1.1"/></g><g transform="translate(134,597)"><path d="M7 2l-4 7h8z" fill="#F0E040" stroke="#2A2A8C" stroke-width="1.1"/><path d="M2 11h10" fill="none" stroke="#2A2A8C" stroke-width="1.6"/><circle cx="7" cy="3" r="1.5" fill="#2A2A8C"/></g><g transform="translate(150,597)"><path d="M3 2v9" fill="none" stroke="#2A2A8C" stroke-width="2"/><path d="M1 11.500h12" fill="none" stroke="#222" stroke-width="1.2"/><path d="M6 11v-3l2 1v2M9 11v-4l2-1v5" fill="none" stroke="#2A2A8C" stroke-width="1"/></g><g transform="translate(165,597)"><path d="M3 2v10" fill="none" stroke="#2A2A8C" stroke-width="1.4"/><path d="M3 3h9v3h-9" fill="none" stroke="#E02020" stroke-width="1.1"/><path d="M3 9h6" fill="none" stroke="#2A2A8C" stroke-width="1.1"/></g><g transform="translate(186,597)"><path d="M2 10h10" fill="none" stroke="#3038C8" stroke-width="1.6"/><circle cx="7" cy="10" r="1.6" fill="#3038C8"/></g><g transform="translate(203,597)"><path d="M2 9l3 3h6l2-3z" fill="#D8D020" stroke="#6E6E10" stroke-width="1"/></g><g transform="translate(222,597)"><path d="M7 2l-5 9h10z M4.500 6.500h5" fill="none" stroke="#888" stroke-width="1" stroke-dasharray="1 1"/><circle cx="7" cy="2" r="1.2" fill="#E02020"/><circle cx="2" cy="11" r="1.2" fill="#30A030"/><circle cx="12" cy="11" r="1.2" fill="#30A030"/></g><g transform="translate(240,597)"><rect x="2.5" y="2.5" width="3" height="7" fill="#fff" stroke="#222" stroke-width="1"/><rect x="7.5" y="2.5" width="3" height="7" fill="#fff" stroke="#222" stroke-width="1"/><path d="M4 2v8M9 2v8" fill="none" stroke="#2A2A8C" stroke-width="1"/><path d="M1 11.500h12" fill="none" stroke="#222" stroke-width="1"/></g><g transform="translate(257,597)"><rect x="2.5" y="2.5" width="7" height="8" fill="#8890D0" stroke="#2A2A8C" stroke-width="1.2"/><rect x="7.5" y="1.5" width="5" height="5" fill="#D8D8F0" stroke="#2A2A8C" stroke-width="1"/><rect x="7.5" y="7.5" width="5" height="4" fill="#D8D8F0" stroke="#2A2A8C" stroke-width="1"/></g><g transform="translate(273,597)"><rect x="2.5" y="2.5" width="7" height="8" fill="#D0CEC0" stroke="#B4B1A3" stroke-width="1.2"/><rect x="7.5" y="1.5" width="5" height="5" fill="#E0DED0" stroke="#B4B1A3" stroke-width="1"/></g></svg>
<div class="a" style="left:187px;top:596.5px;white-space:nowrap;font-size:5.5px;font-weight:bold;color:#111;letter-spacing:-0.2px">ABC</div><div class="a" style="left:204px;top:596.5px;white-space:nowrap;font-size:5.5px;font-weight:bold;color:#111;letter-spacing:-0.2px">ABC</div><div class="a sep" style="left:131px;top:597px;width:2px;height:13px;"></div><div class="a sep" style="left:181px;top:597px;width:2px;height:13px;"></div><div class="a sep" style="left:238px;top:597px;width:2px;height:13px;"></div><!-- command line -->
<div class="a ph" style="left:97px;top:614px;width:769px;height:13px;">Befehlszeile</div><svg class="a" style="left:836px;top:614px" width="28" height="13" viewBox="0 0 28 13"><path d="M5.500 3.500h3v4h-3zM4 7.500h6M7 8v3" fill="none" stroke="#E8EEFC" stroke-width="1.2"/><path d="M18 3.500l6 6M24 3.500l-6 6" stroke="#fff" stroke-width="1.5"/></svg>
<div class="a" style="left:99px;top:629px;width:18px;height:17px;border:1px solid;border-color:#fff #C5C2B2 #C5C2B2 #fff"></div><svg class="a" style="left:102px;top:631px" width="12" height="14"><path d="M3.500 1.500v9l2.500-2 2 4 1.500-1-2-3.500h3z" fill="#F4F2EA" stroke="#B8B5A6" stroke-width="1"/></svg>
<div class="a" style="left:717px;top:630px;width:16px;height:16px;border:1px solid;border-color:#C5C2B2 #fff #fff #C5C2B2;background:#F4F2EA"></div><div class="a" style="left:733px;top:630px;width:16px;height:16px;border:1px solid;border-color:#C5C2B2 #fff #fff #C5C2B2;background:#F4F2EA"></div><div class="a" style="left:750px;top:630px;width:16px;height:16px;border:1px solid;border-color:#C5C2B2 #fff #fff #C5C2B2;background:#F4F2EA"></div><div class="a" style="left:767px;top:630px;width:16px;height:16px;border:1px solid;border-color:#C5C2B2 #fff #fff #C5C2B2;background:#F4F2EA"></div><div class="a" style="left:799px;top:630px;width:16px;height:16px;border:1px solid;border-color:#C5C2B2 #fff #fff #C5C2B2;background:#F4F2EA"></div><div class="a" style="left:815px;top:630px;width:16px;height:16px;border:1px solid;border-color:#C5C2B2 #fff #fff #C5C2B2;background:#F4F2EA"></div><div class="a" style="left:503px;top:629px;width:363px;height:18px;border-bottom:1px solid #D8D5C5;border-left:1px solid #fff"></div><svg class="a" style="left:490px;top:631px" width="380" height="14" viewBox="490 631 380 14"><g transform="translate(504,631)"><path d="M3 3l8 8" fill="none" stroke="#B9B6A8" stroke-width="1.2"/><circle cx="3" cy="3" r="1.2" fill="#B9B6A8"/></g><g transform="translate(520,631)"><path d="M3 3l8 8" fill="none" stroke="#B9B6A8" stroke-width="1.2"/><circle cx="11" cy="11" r="1.2" fill="#B9B6A8"/></g><g transform="translate(536,631)"><circle cx="7" cy="7" r="4" fill="none" stroke="#B9B6A8" stroke-width="1.2"/><circle cx="8" cy="6" r="1" fill="#B9B6A8"/></g><g transform="translate(553,631)"><path d="M3 3l8 8M11 3l-8 8" fill="none" stroke="#B9B6A8" stroke-width="1.2"/></g><g transform="translate(575,631)"><path d="M2 11l5-7 5 7" fill="none" stroke="#B9B6A8" stroke-width="1.2"/></g><g transform="translate(591,631)"><path d="M2 11c2-6 6-7 9-6" fill="none" stroke="#B9B6A8" stroke-width="1.2"/><circle cx="8" cy="4" r="1.2" fill="#B9B6A8"/></g><g transform="translate(609,631)"><path d="M2 3h10l-5 8z" fill="none" stroke="#B9B6A8" stroke-width="1.1"/><circle cx="7" cy="11" r="1.2" fill="#B9B6A8"/></g><g transform="translate(625,631)"><path d="M2 10c3 0 6-5 10-5" fill="none" stroke="#B9B6A8" stroke-width="1.2"/><circle cx="12" cy="5" r="1.2" fill="#B9B6A8"/></g><g transform="translate(647,631)"><path d="M2 2l5 10 1.500-4 4-1.500z" fill="#2030C0" stroke="#2A2A8C" stroke-width="0.8"/><rect x="8" y="1" width="5" height="4" fill="#fff" stroke="#2A2A8C" stroke-width="1.1"/><path d="M8 9l4 4" fill="none" stroke="#E02020" stroke-width="1.6"/></g><g transform="translate(667,631)"><circle cx="2" cy="3" r="0.9" fill="#222"/><circle cx="2" cy="6" r="0.9" fill="#222"/><circle cx="2" cy="9" r="0.9" fill="#222"/><circle cx="2" cy="12" r="0.9" fill="#222"/><circle cx="5" cy="3" r="0.9" fill="#222"/><circle cx="5" cy="6" r="0.9" fill="#222"/><circle cx="5" cy="9" r="0.9" fill="#222"/><circle cx="5" cy="12" r="0.9" fill="#222"/><circle cx="8" cy="3" r="0.9" fill="#222"/><circle cx="8" cy="6" r="0.9" fill="#222"/><circle cx="8" cy="9" r="0.9" fill="#222"/><circle cx="8" cy="12" r="0.9" fill="#222"/><circle cx="11" cy="3" r="0.9" fill="#222"/><circle cx="11" cy="6" r="0.9" fill="#222"/><circle cx="11" cy="9" r="0.9" fill="#222"/><circle cx="11" cy="12" r="0.9" fill="#222"/><circle cx="11" cy="3" r="1.2" fill="#E02020"/></g><g transform="translate(684,631)"><path d="M1 11.500h12" fill="none" stroke="#2A2A8C" stroke-width="1.4"/><path d="M5 11v-7h5" fill="none" stroke="#2A2A8C" stroke-width="1.2"/><circle cx="5" cy="4" r="1.4" fill="#E02020"/><path d="M9 11v-5" fill="none" stroke="#30A030" stroke-width="1.2"/></g><g transform="translate(699,631)"><path d="M1 12l12-10" fill="none" stroke="#30A030" stroke-width="1.6"/><path d="M2 2l10 10" fill="none" stroke="#222" stroke-width="1.1"/><circle cx="7" cy="7" r="1.5" fill="#E02020"/></g><g transform="translate(718,631)"><path d="M2 2h4M2 2v4" fill="none" stroke="#222" stroke-width="1"/><path d="M3 3l9 9" fill="none" stroke="#222" stroke-width="1.1"/><circle cx="6" cy="6" r="1.5" fill="#E02020"/><path d="M4 4l5 5" fill="none" stroke="#E02020" stroke-width="1.6"/></g><g transform="translate(734,631)"><path d="M2 2h4M2 2v4" fill="none" stroke="#222" stroke-width="1"/><path d="M3 3l9 9" fill="none" stroke="#222" stroke-width="1.1"/><path d="M5 5l6 6" fill="none" stroke="#E02020" stroke-width="1.8"/></g><g transform="translate(751,631)"><path d="M2 2h4M2 2v4" fill="none" stroke="#222" stroke-width="1"/><path d="M3 3l9 9" fill="none" stroke="#222" stroke-width="1.1"/><path d="M11 3l-9 9" fill="none" stroke="#222" stroke-width="1.1"/><circle cx="7" cy="7" r="1.6" fill="#E02020"/></g><g transform="translate(768,631)"><path d="M2 3h9l-4 8z" fill="none" stroke="#2A2A8C" stroke-width="1.2"/><circle cx="2" cy="3" r="1.4" fill="#E02020"/><circle cx="11" cy="3" r="1.4" fill="#E02020"/><circle cx="7" cy="11" r="1.4" fill="#E02020"/></g><g transform="translate(784,631)"><path d="M2 12c6 0 9-4 9-10" fill="none" stroke="#2A2A8C" stroke-width="1.3"/><path d="M11 2v10" fill="none" stroke="#222" stroke-width="1"/><circle cx="11" cy="10" r="1.5" fill="#E02020"/></g><g transform="translate(800,631)"><path d="M3 4h8v8h-8z" fill="none" stroke="#222" stroke-width="1.2"/><path d="M2 3l4 3" fill="none" stroke="#E02020" stroke-width="1.6"/><circle cx="11" cy="12" r="1.4" fill="#E02020"/></g><g transform="translate(816,631)"><path d="M2 3c2 8 6 8 10 0" fill="none" stroke="#2A2A8C" stroke-width="1.3"/><path d="M4 2l-2 3" fill="none" stroke="#222" stroke-width="1"/></g><g transform="translate(832,631)"><path d="M2 8h10v4h-10z" fill="#E8D040" stroke="#6E6E10" stroke-width="1"/><path d="M2 6h10" fill="none" stroke="#6E6E10" stroke-width="1"/><path d="M3 4h7" fill="none" stroke="#222" stroke-width="1"/></g><g transform="translate(850,631)"><rect x="5.5" y="3.5" width="6" height="9" fill="#F0F0A0" stroke="#6E6E10" stroke-width="1.1"/><path d="M7 6h3M7 8h3M7 10h3" fill="none" stroke="#6E6E10" stroke-width="0.9"/><path d="M1 4h4M3 2v4" fill="none" stroke="#E02020" stroke-width="1.1"/></g></svg>
<div class="a sep" style="left:571px;top:631px;width:2px;height:14px;"></div><div class="a sep" style="left:643px;top:631px;width:2px;height:14px;"></div><div class="a sep" style="left:664px;top:631px;width:2px;height:14px;"></div><div class="a" style="left:105px;top:668px;width:760px;height:14px;background:#fff;border-top:1px solid #55534A;border-left:1px solid #55534A;border-bottom:1px solid #D8D5C5"></div><div class="a" style="left:107.5px;top:669.5px;white-space:nowrap;font-size:8.6px;letter-spacing:-0.42px;color:#111">Befehl &gt;</div><!-- right panel -->
<div class="a" style="left:866px;top:90px;width:2px;height:596px;background:#ECE9D8;border-right:1px solid #BDBAAA"></div><div class="a ph" style="left:869px;top:90px;width:91px;height:13px;padding-left:3px">Eigenschaften</div><svg class="a" style="left:931px;top:90px" width="28" height="13" viewBox="0 0 28 13"><path d="M5.500 3.500h3v4h-3zM4 7.500h6M7 8v3" fill="none" stroke="#E8EEFC" stroke-width="1.2"/><path d="M18 3.500l6 6M24 3.500l-6 6" stroke="#fff" stroke-width="1.5"/></svg>
<div class="a" style="left:871px;top:106px;width:30px;height:14px;background:#fff;border:1px solid #7F9DB9"></div><div class="a" style="left:874px;top:107.5px;white-space:nowrap;font-size:8.6px;letter-spacing:-0.4px;color:#111">Prc</div><div class="a" style="left:888px;top:107px;width:12px;height:12px;background:#C3D3FC;border:1px solid #B0C2F2;border-radius:2px"></div><svg class="a" style="left:870px;top:104px" width="90" height="34" viewBox="870 104 90 34"><path d="M891 111l3 3 3-3" fill="none" stroke="#4D6185" stroke-width="1.6"/><path d="M906 108h7l-3 4v6" fill="none" stroke="#222" stroke-width="1.1"/><rect x="912.500" y="110.500" width="4" height="7" fill="#fff" stroke="#222"/><path d="M923 108h8l-3.500 4v6" fill="none" stroke="#222" stroke-width="1.1"/><path d="M932 110l-2 4h2l-2 4" fill="none" stroke="#E8C020" stroke-width="1.4"/><path d="M943 118l3-8 1 1-3 8z" fill="#ddd" stroke="#B4B1A3" stroke-width="0.9"/><circle cx="927.500" cy="130" r="5" fill="#E8A0C0"/><path d="M927.500 130l-5 0a5 5 0 0 1 5-5z" fill="#60C0E0"/><path d="M927.500 130l5 0a5 5 0 0 1-5 5z" fill="#E8D840"/><path d="M927.500 130v-5a5 5 0 0 1 5 5z" fill="#80D080"/><path d="M939 133l5-6 5 3-2 4z" fill="#70C8B8"/><path d="M941 128l7 2" stroke="#E06080" stroke-width="1.6"/></svg>
<div class="a" style="left:869px;top:138px;width:90px;height:547px;background:#fff;border:1px solid;border-color:#55534A #C8C5B5 #fff #55534A"></div><div class="a" style="left:870px;top:139.5px;width:45px;height:11px;background:#7A96DF"></div><div class="a pk" style="left:874px;top:140.5px;color:#C9D5F6">Lizenzna...</div><div class="a pv" style="left:918px;top:140.5px;width:41px;overflow:hidden">Dipl.-Ing...</div><div class="a" style="left:870px;top:150.5px;width:89px;height:1px;background:#D4D0C8"></div><div class="a pk" style="left:874px;top:152.5px">Staatsno...</div><div class="a pv" style="left:918px;top:152.5px;width:41px;overflow:hidden">DIN</div><div class="a" style="left:870px;top:162.5px;width:89px;height:1px;background:#D4D0C8"></div><div class="a pk" style="left:874px;top:164.5px">Struktur</div><div class="a pv" style="left:918px;top:164.5px;width:41px;overflow:hidden">Allgemei...</div><div class="a" style="left:870px;top:174.5px;width:89px;height:1px;background:#D4D0C8"></div><div class="a pk" style="left:874px;top:176.5px">Niveau</div><div class="a pv" style="left:918px;top:176.5px;width:41px;overflow:hidden">Erweitert</div><div class="a" style="left:870px;top:186.5px;width:89px;height:1px;background:#D4D0C8"></div><div class="a pk" style="left:874px;top:188.5px">Anzahl K...</div><div class="a pv" style="left:918px;top:188.5px;width:41px;overflow:hidden">817</div><div class="a" style="left:870px;top:198.5px;width:89px;height:1px;background:#D4D0C8"></div><div class="a pk" style="left:874px;top:200.5px">Anzahl S...</div><div class="a pv" style="left:918px;top:200.5px;width:41px;overflow:hidden">149</div><div class="a" style="left:870px;top:210.5px;width:89px;height:1px;background:#D4D0C8"></div><div class="a pk" style="left:874px;top:212.5px">Anzahl 2...</div><div class="a pv" style="left:918px;top:212.5px;width:41px;overflow:hidden">1</div><div class="a" style="left:870px;top:222.5px;width:89px;height:1px;background:#D4D0C8"></div><div class="a pk" style="left:874px;top:224.5px">Anzahl K...</div><div class="a pv" style="left:918px;top:224.5px;width:41px;overflow:hidden">0</div><div class="a" style="left:870px;top:234.5px;width:89px;height:1px;background:#D4D0C8"></div><div class="a pk" style="left:874px;top:236.5px">Anzahl v...</div><div class="a pv" style="left:918px;top:236.5px;width:41px;overflow:hidden">11</div><div class="a" style="left:870px;top:246.5px;width:89px;height:1px;background:#D4D0C8"></div><div class="a pk" style="left:874px;top:248.5px">Anzahl L...</div><div class="a pv" style="left:918px;top:248.5px;width:41px;overflow:hidden">14</div><div class="a" style="left:870px;top:258.5px;width:89px;height:1px;background:#D4D0C8"></div><div class="a pk" style="left:874px;top:260.5px">Anzahl ...</div><div class="a pv" style="left:918px;top:260.5px;width:41px;overflow:hidden">5</div><div class="a" style="left:870px;top:270.5px;width:89px;height:1px;background:#D4D0C8"></div><div class="a" style="left:915px;top:140px;width:1px;height:131px;background:#D4D0C8"></div>
<!-- status bar -->
<div class="a" style="left:0px;top:685px;width:960px;height:13px;background:#ECE9D8;border-top:1px solid #fff"></div><div class="a" style="left:97px;top:686px;width:2px;height:12px;border-left:1px solid #D2CFBF;border-right:1px solid #FBFAF6"></div><div class="a" style="left:195px;top:686px;width:2px;height:12px;border-left:1px solid #D2CFBF;border-right:1px solid #FBFAF6"></div><div class="a" style="left:223px;top:686px;width:2px;height:12px;border-left:1px solid #D2CFBF;border-right:1px solid #FBFAF6"></div><div class="a" style="left:278px;top:686px;width:2px;height:12px;border-left:1px solid #D2CFBF;border-right:1px solid #FBFAF6"></div><div class="a" style="left:750px;top:686px;width:2px;height:12px;border-left:1px solid #D2CFBF;border-right:1px solid #FBFAF6"></div><div class="a" style="left:813px;top:686px;width:2px;height:12px;border-left:1px solid #D2CFBF;border-right:1px solid #FBFAF6"></div><div class="a" style="left:886px;top:686px;width:2px;height:12px;border-left:1px solid #D2CFBF;border-right:1px solid #FBFAF6"></div><div class="a st" style="left:204px;top:686px">m</div><div class="a st" style="left:232px;top:686px">Ebene XY</div><div class="a st" style="left:284px;top:686px">Bereit</div><div class="a st" style="left:759px;top:686px">Fangmodus</div><div class="a st" style="left:823px;top:686px;color:#ACA899">Filter aus</div><div class="a st" style="left:894px;top:686px">Aktuelles BKS</div><div class="a" style="left:946px;top:688px;width:14px;height:3px;background:#111"></div><div class="a" style="left:946px;top:691px;width:14px;height:3px;background:#E02020"></div><div class="a" style="left:946px;top:694px;width:14px;height:3px;background:#F0D020"></div><div class="a" style="left:413px;top:685px;width:106px;height:13px;background:#FFFFE1;border:1px solid #000"><div class="a" style="left:2px;top:0;font-size:9px;line-height:11px;color:#000;white-space:nowrap">Screenshot2.JPG - Paint</div></div>
<!-- taskbar -->
<div class="a" style="left:0px;top:698px;width:960px;height:22px;background:linear-gradient(#3C81F3 0,#2B71EA 2px,#245EDC 5px,#2360DE 14px,#1F50C0 21px,#1941A5 22px)"></div><div class="a" style="left:0px;top:698px;width:80px;height:22px;background:linear-gradient(#5DB75D 0,#44A544 3px,#3A9A3A 11px,#328C32 22px);border-radius:0 9px 9px 0;box-shadow:inset -3px 0 4px rgba(0,40,0,.35)"></div><svg class="a" style="left:8px;top:702px" width="16" height="15" viewBox="0 0 16 15"><path d="M1 2c2-1 4-1 6 0l-1 5c-2-1-4-1-6 0z" fill="#E8502A"/><path d="M8 2.500c2 1 4 1 6 0l-1 5c-2 1-4 1-6 0z" fill="#7CC242"/><path d="M0 8c2-1 4-1 6 0l-1 5c-2-1-4-1-6 0z" fill="#3C8CF0"/><path d="M7 8.500c2 1 4 1 6 0l-1 5c-2 1-4 1-6 0z" fill="#F8C828"/></svg>
<div class="a" style="left:28px;top:700px;white-space:nowrap;font-size:14px;font-weight:bold;font-style:italic;color:#fff;line-height:18px;text-shadow:1px 1px 1px #1A4A1A">Start</div><div class="a tk" style="left:86px;top:700px;width:118px;height:19px;background:linear-gradient(#5C9AF8,#3C80F0 3px,#3A7CEC 15px,#3070E0);border-radius:2px"><div class="a" style="left:24px;top:0">17. Enrico Pieranu...</div></div><div class="a tk" style="left:206px;top:700px;width:119px;height:19px;background:linear-gradient(#2456C4,#1C48B0 3px,#1E4CB6);border-radius:2px"><div class="a" style="left:24px;top:0">Scia Engineer - [H...</div></div><div class="a tk" style="left:328px;top:700px;width:120px;height:19px;background:linear-gradient(#5C9AF8,#3C80F0 3px,#3A7CEC 15px,#3070E0);border-radius:2px"><div class="a" style="left:21px;top:0">Screenshot2.JPG -...</div></div><div class="a tk" style="left:447px;top:700px;width:117px;height:19px;background:linear-gradient(#5C9AF8,#3C80F0 3px,#3A7CEC 15px,#3070E0);border-radius:2px"><div class="a" style="left:22.3px;top:0">Valorec Basel</div></div><svg class="a" style="left:86px;top:701px" width="400" height="17" viewBox="86 701 400 17"><path d="M93 714l10-9 3 3-10 9z" fill="#F0A020"/><path d="M95 706l9 8" stroke="#fff" stroke-width="1.600"/><path d="M94 711l8-6" stroke="#C06010" stroke-width="1.2"/><path d="M214 704l5 1-1 4z" fill="#E8C020"/><path d="M219 705l6-2-3 6z" fill="#E84040"/><path d="M218 709h4l-2 7z" fill="#F08030"/><path d="M214 704l4 5 2 7-3-5z" fill="#60B0E0"/><path d="M336 704h9l-1 5-3 3v4h-2v-4l-3-3z" fill="#E8C870" stroke="#806020" stroke-width="0.800"/><path d="M338 704v4M341 704v5M343 704v4" stroke="#3060C0" stroke-width="1"/><path d="M454 706h5l1 1.500h7v8h-13z" fill="#F8D860" stroke="#A07818" stroke-width="0.900"/><path d="M454 709h13" stroke="#FFF0A0" stroke-width="1.2"/></svg>
<div class="a" style="left:884px;top:698px;width:76px;height:22px;background:linear-gradient(#1CA0F0 0,#1290E8 3px,#0F86E0 12px,#0C78D0 21px);border-left:1px solid #0A4FA0;box-shadow:inset 1px 0 0 #4CC0FF"></div><svg class="a" style="left:878px;top:700px" width="44" height="19" viewBox="878 700 44 19"><circle cx="883.500" cy="709.500" r="5.500" fill="#3C9CF0" stroke="#9CCCFF" stroke-width="1"/><path d="M885 707l-2.500 2.500 2.500 2.500" fill="none" stroke="#fff" stroke-width="1.600"/><rect x="891" y="703" width="13" height="12" fill="#fff"/><path d="M893 706h3l4-2v10l-4-2h-3z" fill="#E01010"/><path d="M896 707v5" stroke="#400" stroke-width="1.500"/><rect x="900" y="704" width="3" height="10" fill="#E01010"/><path d="M906 714l9-9 3 3-9 9z" fill="#F0A020"/><path d="M908 706l8 8" stroke="#fff" stroke-width="1.500"/></svg>
<div class="a" style="left:925px;top:703px;white-space:nowrap;font-size:9.6px;color:#fff;line-height:12px">16:34</div>
</body>
</html>
